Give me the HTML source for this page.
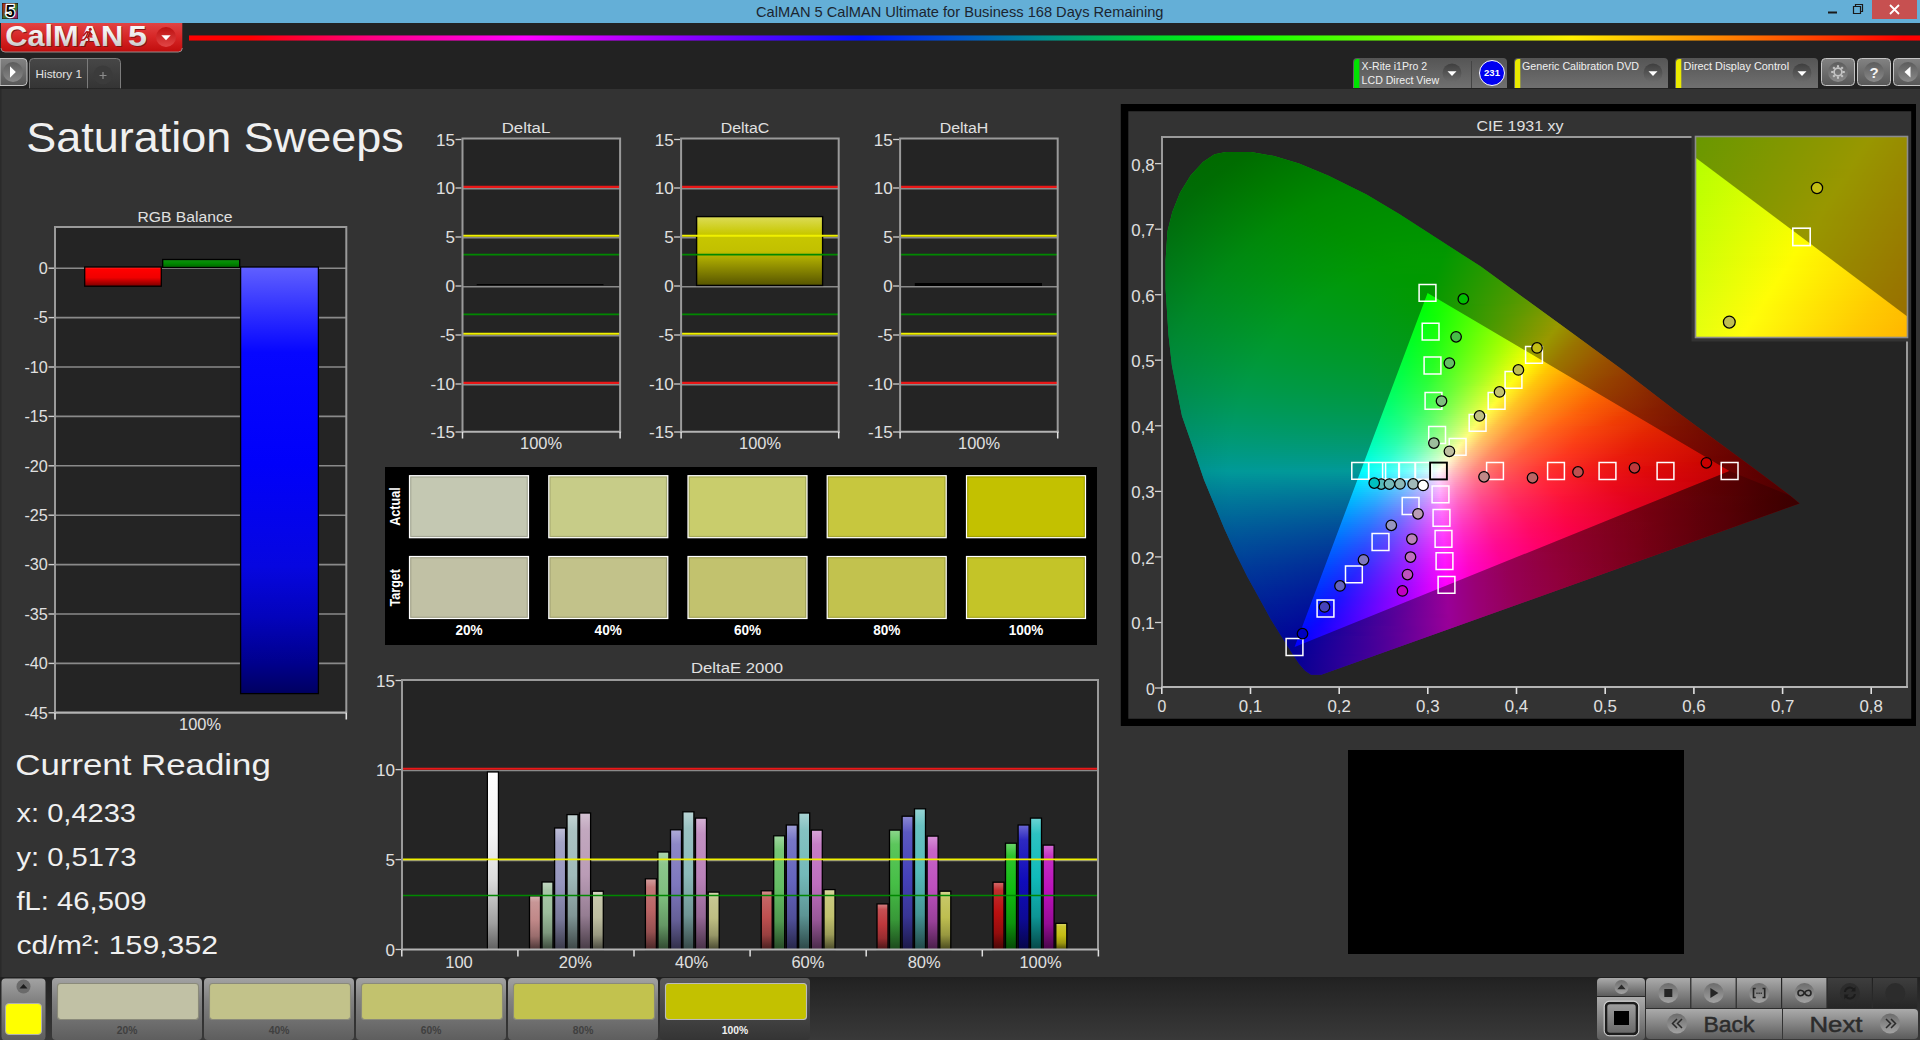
<!DOCTYPE html>
<html><head><meta charset="utf-8"><title>CalMAN 5</title>
<style>
html,body{margin:0;padding:0;background:#333;}
body{width:1920px;height:1040px;overflow:hidden;position:relative;font-family:"Liberation Sans",sans-serif;}
svg{position:absolute;left:0;top:0;display:block;font-family:"Liberation Sans",sans-serif;}
.cie{position:absolute;overflow:hidden;}
.cie i{display:block;height:2px;}
.cie.b i{height:3px;}
</style></head><body>
<svg width="1920" height="1040" viewBox="0 0 1920 1040"><defs><linearGradient id="ico" x1="0" y1="0" x2="1" y2="1"><stop offset="0" stop-color="#e03818"/><stop offset="0.35" stop-color="#905020"/><stop offset="0.6" stop-color="#30a040"/><stop offset="0.8" stop-color="#a03090"/><stop offset="1" stop-color="#c02060"/></linearGradient>
<linearGradient id="rb" x1="189" y1="0" x2="1920" y2="0" gradientUnits="userSpaceOnUse"><stop offset="0" stop-color="#ff0000"/><stop offset="0.035" stop-color="#ff0000"/><stop offset="0.105" stop-color="#ff0080"/><stop offset="0.194" stop-color="#ff00ff"/><stop offset="0.296" stop-color="#8000ff"/><stop offset="0.388" stop-color="#0010ff"/><stop offset="0.44" stop-color="#0050d0"/><stop offset="0.493" stop-color="#009090"/><stop offset="0.563" stop-color="#00dc28"/><stop offset="0.602" stop-color="#00ff00"/><stop offset="0.707" stop-color="#80ff00"/><stop offset="0.799" stop-color="#fff000"/><stop offset="0.89" stop-color="#ff8000"/><stop offset="0.99" stop-color="#ff0000"/><stop offset="1" stop-color="#ff0000"/></linearGradient>
<linearGradient id="logo" x1="0" y1="0" x2="0" y2="1"><stop offset="0" stop-color="#e04444"/><stop offset="0.45" stop-color="#d82828"/><stop offset="1" stop-color="#c00c0c"/></linearGradient>
<linearGradient id="logot" x1="0" y1="0" x2="0" y2="1"><stop offset="0" stop-color="#ffffff"/><stop offset="0.5" stop-color="#ececec"/><stop offset="1" stop-color="#b8b8b8"/></linearGradient>
<linearGradient id="logoc" x1="0" y1="0" x2="0" y2="1"><stop offset="0" stop-color="#bc1010"/><stop offset="1" stop-color="#e24646"/></linearGradient>
<linearGradient id="btn" x1="0" y1="0" x2="0" y2="1"><stop offset="0" stop-color="#838383"/><stop offset="1" stop-color="#575757"/></linearGradient>
<linearGradient id="btnc" x1="0" y1="0" x2="0" y2="1"><stop offset="0" stop-color="#5c5c5c"/><stop offset="1" stop-color="#8a8a8a"/></linearGradient>
<linearGradient id="pan" x1="0" y1="0" x2="0" y2="1"><stop offset="0" stop-color="#555555"/><stop offset="1" stop-color="#707070"/></linearGradient>
<linearGradient id="panc" x1="0" y1="0" x2="0" y2="1"><stop offset="0" stop-color="#3e3e3e"/><stop offset="1" stop-color="#6c6c6c"/></linearGradient>
<linearGradient id="tab" x1="0" y1="0" x2="0" y2="1"><stop offset="0" stop-color="#474747"/><stop offset="1" stop-color="#343434"/></linearGradient>
<linearGradient id="gR" x1="0" y1="0" x2="0" y2="1"><stop offset="0" stop-color="#ff3030"/><stop offset="0.12" stop-color="#ff0000"/><stop offset="0.55" stop-color="#f00000"/><stop offset="1" stop-color="#7a0000"/></linearGradient>
<linearGradient id="gG" x1="0" y1="0" x2="0" y2="1"><stop offset="0" stop-color="#109010"/><stop offset="0.5" stop-color="#008800"/><stop offset="1" stop-color="#006000"/></linearGradient>
<linearGradient id="gB" x1="0" y1="0" x2="0" y2="1"><stop offset="0" stop-color="#6060ff"/><stop offset="0.117" stop-color="#2a2aff"/><stop offset="0.2" stop-color="#0606ff"/><stop offset="0.46" stop-color="#0000fa"/><stop offset="0.7" stop-color="#0606e0"/><stop offset="0.82" stop-color="#0303bc"/><stop offset="0.93" stop-color="#00008c"/><stop offset="1" stop-color="#000060"/></linearGradient>
<linearGradient id="gY" x1="0" y1="0" x2="0" y2="1"><stop offset="0" stop-color="#dcdc58"/><stop offset="0.25" stop-color="#c8c800"/><stop offset="0.5" stop-color="#c2c000"/><stop offset="1" stop-color="#565400"/></linearGradient>
<linearGradient id="bW" x1="0" y1="0" x2="0" y2="1"><stop offset="0" stop-color="#ffffff"/><stop offset="0.35" stop-color="#f4f4f4"/><stop offset="0.6" stop-color="#dcdcdc"/><stop offset="0.85" stop-color="#a0a0a0"/><stop offset="1" stop-color="#606060"/></linearGradient>
<linearGradient id="b20_0" x1="0" y1="0" x2="0" y2="1"><stop offset="0" stop-color="#d8b5b5"/><stop offset="0.12" stop-color="#c89696"/><stop offset="0.45" stop-color="#c08888"/><stop offset="0.75" stop-color="#9a6d6d"/><stop offset="1" stop-color="#493434"/></linearGradient>
<linearGradient id="b20_1" x1="0" y1="0" x2="0" y2="1"><stop offset="0" stop-color="#c2d7c2"/><stop offset="0.12" stop-color="#a8c6a8"/><stop offset="0.45" stop-color="#9cbe9c"/><stop offset="0.75" stop-color="#7d987d"/><stop offset="1" stop-color="#3b483b"/></linearGradient>
<linearGradient id="b20_2" x1="0" y1="0" x2="0" y2="1"><stop offset="0" stop-color="#bebed7"/><stop offset="0.12" stop-color="#a3a3c6"/><stop offset="0.45" stop-color="#9696be"/><stop offset="0.75" stop-color="#787898"/><stop offset="1" stop-color="#393948"/></linearGradient>
<linearGradient id="b20_3" x1="0" y1="0" x2="0" y2="1"><stop offset="0" stop-color="#c4d4d4"/><stop offset="0.12" stop-color="#abc2c2"/><stop offset="0.45" stop-color="#a0baba"/><stop offset="0.75" stop-color="#809595"/><stop offset="1" stop-color="#3d4747"/></linearGradient>
<linearGradient id="b20_4" x1="0" y1="0" x2="0" y2="1"><stop offset="0" stop-color="#d4c2d2"/><stop offset="0.12" stop-color="#c2a8bf"/><stop offset="0.45" stop-color="#ba9cb6"/><stop offset="0.75" stop-color="#957d92"/><stop offset="1" stop-color="#473b45"/></linearGradient>
<linearGradient id="b20_5" x1="0" y1="0" x2="0" y2="1"><stop offset="0" stop-color="#d7d7c4"/><stop offset="0.12" stop-color="#c6c6ab"/><stop offset="0.45" stop-color="#bebea0"/><stop offset="0.75" stop-color="#989880"/><stop offset="1" stop-color="#48483d"/></linearGradient>
<linearGradient id="b40_0" x1="0" y1="0" x2="0" y2="1"><stop offset="0" stop-color="#d49f9f"/><stop offset="0.12" stop-color="#c27777"/><stop offset="0.45" stop-color="#ba6464"/><stop offset="0.75" stop-color="#955050"/><stop offset="1" stop-color="#472626"/></linearGradient>
<linearGradient id="b40_1" x1="0" y1="0" x2="0" y2="1"><stop offset="0" stop-color="#afd7af"/><stop offset="0.12" stop-color="#8dc68d"/><stop offset="0.45" stop-color="#7ebe7e"/><stop offset="0.75" stop-color="#659865"/><stop offset="1" stop-color="#304830"/></linearGradient>
<linearGradient id="b40_2" x1="0" y1="0" x2="0" y2="1"><stop offset="0" stop-color="#afabd7"/><stop offset="0.12" stop-color="#8d88c6"/><stop offset="0.45" stop-color="#7e78be"/><stop offset="0.75" stop-color="#656098"/><stop offset="1" stop-color="#302e48"/></linearGradient>
<linearGradient id="b40_3" x1="0" y1="0" x2="0" y2="1"><stop offset="0" stop-color="#b8d4d4"/><stop offset="0.12" stop-color="#9ac2c2"/><stop offset="0.45" stop-color="#8cbaba"/><stop offset="0.75" stop-color="#709595"/><stop offset="1" stop-color="#354747"/></linearGradient>
<linearGradient id="b40_4" x1="0" y1="0" x2="0" y2="1"><stop offset="0" stop-color="#d4b2d4"/><stop offset="0.12" stop-color="#c291c2"/><stop offset="0.45" stop-color="#ba82ba"/><stop offset="0.75" stop-color="#956895"/><stop offset="1" stop-color="#473147"/></linearGradient>
<linearGradient id="b40_5" x1="0" y1="0" x2="0" y2="1"><stop offset="0" stop-color="#d7d7b2"/><stop offset="0.12" stop-color="#c6c691"/><stop offset="0.45" stop-color="#bebe82"/><stop offset="0.75" stop-color="#989868"/><stop offset="1" stop-color="#484831"/></linearGradient>
<linearGradient id="b60_0" x1="0" y1="0" x2="0" y2="1"><stop offset="0" stop-color="#d79292"/><stop offset="0.12" stop-color="#c66565"/><stop offset="0.45" stop-color="#be5050"/><stop offset="0.75" stop-color="#984040"/><stop offset="1" stop-color="#481e1e"/></linearGradient>
<linearGradient id="b60_1" x1="0" y1="0" x2="0" y2="1"><stop offset="0" stop-color="#9fd79f"/><stop offset="0.12" stop-color="#77c677"/><stop offset="0.45" stop-color="#64be64"/><stop offset="0.75" stop-color="#509850"/><stop offset="1" stop-color="#264826"/></linearGradient>
<linearGradient id="b60_2" x1="0" y1="0" x2="0" y2="1"><stop offset="0" stop-color="#9f9fd7"/><stop offset="0.12" stop-color="#7777c6"/><stop offset="0.45" stop-color="#6464be"/><stop offset="0.75" stop-color="#505098"/><stop offset="1" stop-color="#262648"/></linearGradient>
<linearGradient id="b60_3" x1="0" y1="0" x2="0" y2="1"><stop offset="0" stop-color="#a9d4d4"/><stop offset="0.12" stop-color="#85c2c2"/><stop offset="0.45" stop-color="#74baba"/><stop offset="0.75" stop-color="#5d9595"/><stop offset="1" stop-color="#2c4747"/></linearGradient>
<linearGradient id="b60_4" x1="0" y1="0" x2="0" y2="1"><stop offset="0" stop-color="#d7a5d7"/><stop offset="0.12" stop-color="#c67fc6"/><stop offset="0.45" stop-color="#be6ebe"/><stop offset="0.75" stop-color="#985898"/><stop offset="1" stop-color="#482a48"/></linearGradient>
<linearGradient id="b60_5" x1="0" y1="0" x2="0" y2="1"><stop offset="0" stop-color="#d9d9a5"/><stop offset="0.12" stop-color="#c9c97f"/><stop offset="0.45" stop-color="#c2c26e"/><stop offset="0.75" stop-color="#9b9b58"/><stop offset="1" stop-color="#4a4a2a"/></linearGradient>
<linearGradient id="b80_0" x1="0" y1="0" x2="0" y2="1"><stop offset="0" stop-color="#d78486"/><stop offset="0.12" stop-color="#c65053"/><stop offset="0.45" stop-color="#be383c"/><stop offset="0.75" stop-color="#982d30"/><stop offset="1" stop-color="#481517"/></linearGradient>
<linearGradient id="b80_1" x1="0" y1="0" x2="0" y2="1"><stop offset="0" stop-color="#8cd78c"/><stop offset="0.12" stop-color="#5cc65c"/><stop offset="0.45" stop-color="#46be46"/><stop offset="0.75" stop-color="#389838"/><stop offset="1" stop-color="#1b481b"/></linearGradient>
<linearGradient id="b80_2" x1="0" y1="0" x2="0" y2="1"><stop offset="0" stop-color="#8c8ad4"/><stop offset="0.12" stop-color="#5c59c2"/><stop offset="0.45" stop-color="#4642ba"/><stop offset="0.75" stop-color="#383595"/><stop offset="1" stop-color="#1b1947"/></linearGradient>
<linearGradient id="b80_3" x1="0" y1="0" x2="0" y2="1"><stop offset="0" stop-color="#96d4d4"/><stop offset="0.12" stop-color="#6ac2c2"/><stop offset="0.45" stop-color="#56baba"/><stop offset="0.75" stop-color="#459595"/><stop offset="1" stop-color="#214747"/></linearGradient>
<linearGradient id="b80_4" x1="0" y1="0" x2="0" y2="1"><stop offset="0" stop-color="#d792d7"/><stop offset="0.12" stop-color="#c665c6"/><stop offset="0.45" stop-color="#be50be"/><stop offset="0.75" stop-color="#984098"/><stop offset="1" stop-color="#481e48"/></linearGradient>
<linearGradient id="b80_5" x1="0" y1="0" x2="0" y2="1"><stop offset="0" stop-color="#d7d792"/><stop offset="0.12" stop-color="#c6c665"/><stop offset="0.45" stop-color="#bebe50"/><stop offset="0.75" stop-color="#989840"/><stop offset="1" stop-color="#48481e"/></linearGradient>
<linearGradient id="b100_0" x1="0" y1="0" x2="0" y2="1"><stop offset="0" stop-color="#d46b6b"/><stop offset="0.12" stop-color="#c22d2d"/><stop offset="0.45" stop-color="#ba1010"/><stop offset="0.75" stop-color="#950d0d"/><stop offset="1" stop-color="#470606"/></linearGradient>
<linearGradient id="b100_1" x1="0" y1="0" x2="0" y2="1"><stop offset="0" stop-color="#6bd46b"/><stop offset="0.12" stop-color="#2dc22d"/><stop offset="0.45" stop-color="#10ba10"/><stop offset="0.75" stop-color="#0d950d"/><stop offset="1" stop-color="#064706"/></linearGradient>
<linearGradient id="b100_2" x1="0" y1="0" x2="0" y2="1"><stop offset="0" stop-color="#6b68d4"/><stop offset="0.12" stop-color="#2d29c2"/><stop offset="0.45" stop-color="#100cba"/><stop offset="0.75" stop-color="#0d0a95"/><stop offset="1" stop-color="#060547"/></linearGradient>
<linearGradient id="b100_3" x1="0" y1="0" x2="0" y2="1"><stop offset="0" stop-color="#6bd4d4"/><stop offset="0.12" stop-color="#2dc2c2"/><stop offset="0.45" stop-color="#10baba"/><stop offset="0.75" stop-color="#0d9595"/><stop offset="1" stop-color="#064747"/></linearGradient>
<linearGradient id="b100_4" x1="0" y1="0" x2="0" y2="1"><stop offset="0" stop-color="#d46bd4"/><stop offset="0.12" stop-color="#c22dc2"/><stop offset="0.45" stop-color="#ba10ba"/><stop offset="0.75" stop-color="#950d95"/><stop offset="1" stop-color="#470647"/></linearGradient>
<linearGradient id="b100_5" x1="0" y1="0" x2="0" y2="1"><stop offset="0" stop-color="#dad76d"/><stop offset="0.12" stop-color="#cbc630"/><stop offset="0.45" stop-color="#c4be14"/><stop offset="0.75" stop-color="#9d9810"/><stop offset="1" stop-color="#4a4808"/></linearGradient>
<linearGradient id="bot" x1="0" y1="0" x2="0" y2="1"><stop offset="0" stop-color="#202020"/><stop offset="0.1" stop-color="#242424"/><stop offset="1" stop-color="#393939"/></linearGradient>
<linearGradient id="box" x1="0" y1="0" x2="0" y2="1"><stop offset="0" stop-color="#a2a2a2"/><stop offset="0.35" stop-color="#828282"/><stop offset="1" stop-color="#5e5e5e"/></linearGradient>
<linearGradient id="boxs" x1="0" y1="0" x2="0" y2="1"><stop offset="0" stop-color="#5c5c5c"/><stop offset="1" stop-color="#343434"/></linearGradient>
<linearGradient id="tb" x1="0" y1="0" x2="0" y2="1"><stop offset="0" stop-color="#ababab"/><stop offset="1" stop-color="#5c5c5c"/></linearGradient>
<linearGradient id="tbd" x1="0" y1="0" x2="0" y2="1"><stop offset="0" stop-color="#3e3e3e"/><stop offset="1" stop-color="#262626"/></linearGradient>
<linearGradient id="tbc" x1="0" y1="0" x2="0" y2="1"><stop offset="0" stop-color="#6c6c6c"/><stop offset="1" stop-color="#a2a2a2"/></linearGradient></defs>
<rect x="0" y="0" width="1920" height="1040" fill="#333333"/>
<rect x="0" y="0" width="1920" height="23" fill="#64afd7"/>
<text x="756" y="17" font-size="15" fill="#1b2530" textLength="407.5" lengthAdjust="spacingAndGlyphs">CalMAN 5 CalMAN Ultimate for Business 168 Days Remaining</text>
<rect x="2" y="3" width="16" height="16" fill="#181010"/><rect x="2.5" y="3.500" width="15" height="15" fill="url(#ico)" opacity=".8"/>
<text x="10.2" y="16.6" font-size="16" font-weight="bold" text-anchor="middle" fill="#000" stroke="#fff" stroke-width="2.4" paint-order="stroke">5</text>
<rect x="1828" y="11.5" width="9" height="2" fill="#1a1a1a"/>
<path d="M1853.5 6.5h7v7h-7z M1855.5 6.5v-2h7v7h-2" fill="none" stroke="#1a1a1a" stroke-width="1.2"/>
<rect x="1872" y="0" width="45" height="19" fill="#c75050"/>
<path d="M1890 5l9 9m0-9l-9 9" stroke="#fff" stroke-width="1.8" fill="none"/>
<rect x="0" y="23" width="1920" height="66" fill="#222222"/>
<rect x="189" y="35" width="1731" height="6" fill="url(#rb)" opacity=".55"/>
<rect x="189" y="36" width="1731" height="4" fill="url(#rb)"/>
<path d="M1 23h181.300v25a4 4 0 0 1-4 4h-173.300a4 4 0 0 1-4-4z" fill="url(#logo)"/>
<path d="M1 48a4 4 0 0 0 4 4h173.300a4 4 0 0 0 4-4" fill="none" stroke="#9a8a8a" stroke-width="1"/>
<g font-weight="bold" font-size="29">
<text x="6.100" y="46.800" fill="#801414" textLength="118" lengthAdjust="spacingAndGlyphs">CalMAN</text>
<text x="128.800" y="46.800" fill="#801414" textLength="19" lengthAdjust="spacingAndGlyphs">5</text>
<text x="5.200" y="45.700" fill="url(#logot)" textLength="118" lengthAdjust="spacingAndGlyphs">CalMAN</text>
<text x="127.900" y="45.700" fill="url(#logot)" textLength="19" lengthAdjust="spacingAndGlyphs">5</text>
</g>
<circle cx="166" cy="37" r="10" fill="url(#logoc)"/><path d="M161.3 35.3h9.4l-4.7 5z" fill="#fff"/>
<path d="M83.500 35.500l3.200-3.800 3 .6 2.200 2.400M88 32.500l-1.600 4 2.600 2.400-.4 3.200M86.200 37l-2 2.600-2.600.6" stroke="#b01414" stroke-width="1.500" fill="none" stroke-linecap="round" stroke-linejoin="round"/><circle cx="90.300" cy="29.300" r="1.500" fill="#b01414"/>
<path d="M0 58.5h23a4 4 0 0 1 4 4v19a4 4 0 0 1-4 4h-23z" fill="url(#btn)" stroke="#c4c4c4"/>
<circle cx="13" cy="72" r="10" fill="url(#btnc)"/><path d="M10 66.3v11.4l5.8-5.7z" fill="#fff"/>
<path d="M29.5 88.3v-25.8a4 4 0 0 1 4-4h83a4 4 0 0 1 4 4v25.8" fill="url(#tab)" stroke="#7c7c7c"/>
<path d="M87.5 59v29.300" stroke="#7c7c7c"/>
<text x="35.5" y="78.2" font-size="11.5" fill="#e4e4e4" textLength="46.5" lengthAdjust="spacingAndGlyphs">History 1</text>
<circle cx="103" cy="75" r="9.5" fill="#3b3b3b"/><path d="M99.5 75.5h7M103 72v7" stroke="#8c8c8c" stroke-width="1.2"/>
<path d="M1353 88v-26a4 4 0 0 1 4-4h146a4 4 0 0 1 4 4v26z" fill="url(#pan)"/>
<path d="M1354 88v-25.500a3.5 3.5 0 0 1 3.5-3.5h1.800v29z" fill="#00e400"/>
<circle cx="1452" cy="73" r="9.5" fill="url(#panc)"/><path d="M1447.5 71.3h9l-4.5 4.8z" fill="#fff"/>
<path d="M1471.5 61v27" stroke="#444" stroke-width="1"/>
<circle cx="1492" cy="73" r="12.5" fill="#0000f0" stroke="#fff" stroke-width="1"/>
<text x="1492" y="76.4" font-size="9.5" fill="#fff" text-anchor="middle" font-weight="bold">231</text>
<text x="1361.6" y="69.6" font-size="10.5" fill="#f0f0f0" textLength="65.5" lengthAdjust="spacingAndGlyphs">X-Rite i1Pro 2</text>
<text x="1361.6" y="83.5" font-size="10.5" fill="#f0f0f0" textLength="77.5" lengthAdjust="spacingAndGlyphs">LCD Direct View</text>
<path d="M1514 88v-26a4 4 0 0 1 4-4h146a4 4 0 0 1 4 4v26z" fill="url(#pan)"/>
<path d="M1515 88v-25.500a3.5 3.5 0 0 1 3.5-3.5h1.800v29z" fill="#eaea00"/>
<circle cx="1653" cy="73" r="9.5" fill="url(#panc)"/><path d="M1648.5 71.3h9l-4.5 4.8z" fill="#fff"/>
<text x="1522" y="69.6" font-size="10.5" fill="#f0f0f0" textLength="117" lengthAdjust="spacingAndGlyphs">Generic Calibration DVD</text>
<path d="M1675 88v-26a4 4 0 0 1 4-4h135a4 4 0 0 1 4 4v26z" fill="url(#pan)"/>
<path d="M1676 88v-25.500a3.5 3.5 0 0 1 3.5-3.5h1.800v29z" fill="#eaea00"/>
<circle cx="1802" cy="73" r="9.5" fill="url(#panc)"/><path d="M1797.5 71.3h9l-4.5 4.8z" fill="#fff"/>
<text x="1683.6" y="69.6" font-size="10.5" fill="#f0f0f0" textLength="105.5" lengthAdjust="spacingAndGlyphs">Direct Display Control</text>
<rect x="1821.5" y="58.5" width="33" height="27" rx="4" fill="url(#btn)" stroke="#c4c4c4" stroke-width="1"/>
<circle cx="1838" cy="72" r="10" fill="url(#btnc)"/>
<rect x="1857.5" y="58.5" width="33" height="27" rx="4" fill="url(#btn)" stroke="#c4c4c4" stroke-width="1"/>
<circle cx="1874" cy="72" r="10" fill="url(#btnc)"/>
<rect x="1893.5" y="58.5" width="33" height="27" rx="4" fill="url(#btn)" stroke="#c4c4c4" stroke-width="1"/>
<circle cx="1908" cy="72" r="10" fill="url(#btnc)"/>
<path d="M1842.50 72.00L1844.80 72.00" stroke="#c4c4c4" stroke-width="2.1"/><path d="M1841.18 75.18L1842.81 76.81" stroke="#c4c4c4" stroke-width="2.1"/><path d="M1838.00 76.50L1838.00 78.80" stroke="#c4c4c4" stroke-width="2.1"/><path d="M1834.82 75.18L1833.19 76.81" stroke="#c4c4c4" stroke-width="2.1"/><path d="M1833.50 72.00L1831.20 72.00" stroke="#c4c4c4" stroke-width="2.1"/><path d="M1834.82 68.82L1833.19 67.19" stroke="#c4c4c4" stroke-width="2.1"/><path d="M1838.00 67.50L1838.00 65.20" stroke="#c4c4c4" stroke-width="2.1"/><path d="M1841.18 68.82L1842.81 67.19" stroke="#c4c4c4" stroke-width="2.1"/><circle cx="1838" cy="72" r="3.9" fill="none" stroke="#c4c4c4" stroke-width="1.7"/>
<text x="1874" y="77.5" font-size="15" fill="#f4f4f4" text-anchor="middle" font-weight="bold">?</text>
<path d="M1910.5 66.5v11l-6-5.5z" fill="#fff"/>
<rect x="0" y="89" width="1.5" height="888" fill="#2a2a2a"/>
<text x="26.3" y="152" font-size="42" fill="#f0f0f0" textLength="377.5" lengthAdjust="spacingAndGlyphs">Saturation Sweeps</text>
<text x="15.3" y="775.3" font-size="29.5" fill="#f0f0f0" textLength="255.5" lengthAdjust="spacingAndGlyphs">Current Reading</text>
<text x="16.5" y="821.8" font-size="26.5" fill="#f0f0f0" textLength="119.5" lengthAdjust="spacingAndGlyphs">x: 0,4233</text>
<text x="16.5" y="865.6" font-size="26.5" fill="#f0f0f0" textLength="120" lengthAdjust="spacingAndGlyphs">y: 0,5173</text>
<text x="16.5" y="910.3" font-size="26.5" fill="#f0f0f0" textLength="130" lengthAdjust="spacingAndGlyphs">fL: 46,509</text>
<text x="16.5" y="954.0" font-size="26.5" fill="#f0f0f0" textLength="201.5" lengthAdjust="spacingAndGlyphs">cd/m²: 159,352</text>
<text x="185" y="222.3" font-size="15.5" fill="#e0e0e0" text-anchor="middle" textLength="95" lengthAdjust="spacingAndGlyphs">RGB Balance</text>
<rect x="55" y="227" width="291" height="485.5" fill="#242424"/>
<path d="M55 268.2h291" stroke="#8a8a8a" stroke-width="1.6"/>
<path d="M48.5 268.2h6" stroke="#d0d0d0" stroke-width="1.4"/>
<text x="47.8" y="273.9" font-size="16.2" fill="#e0e0e0" text-anchor="end">0</text>
<path d="M55 317.6h291" stroke="#8a8a8a" stroke-width="1.6"/>
<path d="M48.5 317.6h6" stroke="#d0d0d0" stroke-width="1.4"/>
<text x="47.8" y="323.3" font-size="16.2" fill="#e0e0e0" text-anchor="end">-5</text>
<path d="M55 367.0h291" stroke="#8a8a8a" stroke-width="1.6"/>
<path d="M48.5 367.0h6" stroke="#d0d0d0" stroke-width="1.4"/>
<text x="47.8" y="372.7" font-size="16.2" fill="#e0e0e0" text-anchor="end">-10</text>
<path d="M55 416.4h291" stroke="#8a8a8a" stroke-width="1.6"/>
<path d="M48.5 416.4h6" stroke="#d0d0d0" stroke-width="1.4"/>
<text x="47.8" y="422.1" font-size="16.2" fill="#e0e0e0" text-anchor="end">-15</text>
<path d="M55 465.8h291" stroke="#8a8a8a" stroke-width="1.6"/>
<path d="M48.5 465.8h6" stroke="#d0d0d0" stroke-width="1.4"/>
<text x="47.8" y="471.5" font-size="16.2" fill="#e0e0e0" text-anchor="end">-20</text>
<path d="M55 515.2h291" stroke="#8a8a8a" stroke-width="1.6"/>
<path d="M48.5 515.2h6" stroke="#d0d0d0" stroke-width="1.4"/>
<text x="47.8" y="520.9" font-size="16.2" fill="#e0e0e0" text-anchor="end">-25</text>
<path d="M55 564.6h291" stroke="#8a8a8a" stroke-width="1.6"/>
<path d="M48.5 564.6h6" stroke="#d0d0d0" stroke-width="1.4"/>
<text x="47.8" y="570.3" font-size="16.2" fill="#e0e0e0" text-anchor="end">-30</text>
<path d="M55 614.0h291" stroke="#8a8a8a" stroke-width="1.6"/>
<path d="M48.5 614.0h6" stroke="#d0d0d0" stroke-width="1.4"/>
<text x="47.8" y="619.7" font-size="16.2" fill="#e0e0e0" text-anchor="end">-35</text>
<path d="M55 663.4h291" stroke="#8a8a8a" stroke-width="1.6"/>
<path d="M48.5 663.4h6" stroke="#d0d0d0" stroke-width="1.4"/>
<text x="47.8" y="669.1" font-size="16.2" fill="#e0e0e0" text-anchor="end">-40</text>
<path d="M48.5 712.8h6" stroke="#d0d0d0" stroke-width="1.4"/>
<text x="47.8" y="718.5" font-size="16.2" fill="#e0e0e0" text-anchor="end">-45</text>
<path d="M55 713V227h291.3V713" fill="none" stroke="#9a9a9a" stroke-width="2"/>
<path d="M54 712.6h293" stroke="#b4b4b4" stroke-width="2.2"/>
<path d="M55 713v6.5M346.3 713v6.5" stroke="#e0e0e0" stroke-width="1.6"/>
<text x="200" y="730" font-size="16.5" fill="#e0e0e0" text-anchor="middle" textLength="42" lengthAdjust="spacingAndGlyphs">100%</text>
<rect x="84.7" y="267" width="76.6" height="19.2" fill="url(#gR)" stroke="#000" stroke-width="1.3"/>
<rect x="162.7" y="259.5" width="77" height="8" fill="url(#gG)" stroke="#000" stroke-width="1.3"/>
<rect x="240.6" y="267" width="77.8" height="426.6" fill="url(#gB)" stroke="#000" stroke-width="1.3"/>
<text x="526" y="132.8" font-size="15.5" fill="#e0e0e0" text-anchor="middle" textLength="48.5" lengthAdjust="spacingAndGlyphs">DeltaL</text>
<rect x="462" y="138.5" width="158.6" height="293.5" fill="#242424"/>
<path d="M455.5 139.5h6" stroke="#d0d0d0" stroke-width="1.3"/>
<text x="455" y="145.7" font-size="17" fill="#e0e0e0" text-anchor="end">15</text>
<path d="M462 188.7H620.6" stroke="#8a8a8a" stroke-width="1.4"/>
<path d="M455.5 188.0h6" stroke="#d0d0d0" stroke-width="1.3"/>
<text x="455" y="194.2" font-size="17" fill="#e0e0e0" text-anchor="end">10</text>
<path d="M462 237.7H620.6" stroke="#8a8a8a" stroke-width="1.4"/>
<path d="M455.5 237.0h6" stroke="#d0d0d0" stroke-width="1.3"/>
<text x="455" y="243.2" font-size="17" fill="#e0e0e0" text-anchor="end">5</text>
<path d="M462 286.7H620.6" stroke="#8a8a8a" stroke-width="1.4"/>
<path d="M455.5 286.0h6" stroke="#d0d0d0" stroke-width="1.3"/>
<text x="455" y="292.2" font-size="17" fill="#e0e0e0" text-anchor="end">0</text>
<path d="M462 335.7H620.6" stroke="#8a8a8a" stroke-width="1.4"/>
<path d="M455.5 335.0h6" stroke="#d0d0d0" stroke-width="1.3"/>
<text x="455" y="341.2" font-size="17" fill="#e0e0e0" text-anchor="end">-5</text>
<path d="M462 384.7H620.6" stroke="#8a8a8a" stroke-width="1.4"/>
<path d="M455.5 384.0h6" stroke="#d0d0d0" stroke-width="1.3"/>
<text x="455" y="390.2" font-size="17" fill="#e0e0e0" text-anchor="end">-10</text>
<path d="M455.5 432.0h6" stroke="#d0d0d0" stroke-width="1.3"/>
<text x="455" y="438.2" font-size="17" fill="#e0e0e0" text-anchor="end">-15</text>
<path d="M462 186.8H620.6" stroke="#e81818" stroke-width="2.2"/>
<path d="M462 382.8H620.6" stroke="#e81818" stroke-width="2.2"/>
<path d="M462 235.8H620.6" stroke="#f0f000" stroke-width="2"/>
<path d="M462 333.8H620.6" stroke="#f0f000" stroke-width="2"/>
<path d="M462 254.6H620.6" stroke="#008800" stroke-width="1.6"/>
<path d="M462 314.4H620.6" stroke="#008800" stroke-width="1.6"/>
<path d="M462.5 432.5V138.5H620.1V432.5" fill="none" stroke="#9a9a9a" stroke-width="2"/>
<path d="M461.5 431.8H621.1" stroke="#b4b4b4" stroke-width="2"/>
<path d="M462.5 432v6.5M620.1 432v6.5" stroke="#e0e0e0" stroke-width="1.5"/>
<text x="541" y="449.3" font-size="16.5" fill="#e0e0e0" text-anchor="middle" textLength="42" lengthAdjust="spacingAndGlyphs">100%</text>
<text x="745" y="132.8" font-size="15.5" fill="#e0e0e0" text-anchor="middle" textLength="48.5" lengthAdjust="spacingAndGlyphs">DeltaC</text>
<rect x="680.6" y="138.5" width="158.6" height="293.5" fill="#242424"/>
<path d="M674.1 139.5h6" stroke="#d0d0d0" stroke-width="1.3"/>
<text x="673.6" y="145.7" font-size="17" fill="#e0e0e0" text-anchor="end">15</text>
<path d="M680.6 188.7H839.2" stroke="#8a8a8a" stroke-width="1.4"/>
<path d="M674.1 188.0h6" stroke="#d0d0d0" stroke-width="1.3"/>
<text x="673.6" y="194.2" font-size="17" fill="#e0e0e0" text-anchor="end">10</text>
<path d="M680.6 237.7H839.2" stroke="#8a8a8a" stroke-width="1.4"/>
<path d="M674.1 237.0h6" stroke="#d0d0d0" stroke-width="1.3"/>
<text x="673.6" y="243.2" font-size="17" fill="#e0e0e0" text-anchor="end">5</text>
<path d="M680.6 286.7H839.2" stroke="#8a8a8a" stroke-width="1.4"/>
<path d="M674.1 286.0h6" stroke="#d0d0d0" stroke-width="1.3"/>
<text x="673.6" y="292.2" font-size="17" fill="#e0e0e0" text-anchor="end">0</text>
<path d="M680.6 335.7H839.2" stroke="#8a8a8a" stroke-width="1.4"/>
<path d="M674.1 335.0h6" stroke="#d0d0d0" stroke-width="1.3"/>
<text x="673.6" y="341.2" font-size="17" fill="#e0e0e0" text-anchor="end">-5</text>
<path d="M680.6 384.7H839.2" stroke="#8a8a8a" stroke-width="1.4"/>
<path d="M674.1 384.0h6" stroke="#d0d0d0" stroke-width="1.3"/>
<text x="673.6" y="390.2" font-size="17" fill="#e0e0e0" text-anchor="end">-10</text>
<path d="M674.1 432.0h6" stroke="#d0d0d0" stroke-width="1.3"/>
<text x="673.6" y="438.2" font-size="17" fill="#e0e0e0" text-anchor="end">-15</text>
<rect x="696.6" y="216.6" width="126" height="68.8" fill="url(#gY)" stroke="#000" stroke-width="1.4"/>
<path d="M680.6 186.8H839.2" stroke="#e81818" stroke-width="2.2"/>
<path d="M680.6 382.8H839.2" stroke="#e81818" stroke-width="2.2"/>
<path d="M680.6 235.8H839.2" stroke="#f0f000" stroke-width="2"/>
<path d="M680.6 333.8H839.2" stroke="#f0f000" stroke-width="2"/>
<path d="M680.6 254.6H839.2" stroke="#008800" stroke-width="1.6"/>
<path d="M680.6 314.4H839.2" stroke="#008800" stroke-width="1.6"/>
<path d="M681.1 432.5V138.5H838.7V432.5" fill="none" stroke="#9a9a9a" stroke-width="2"/>
<path d="M680.1 431.8H839.7" stroke="#b4b4b4" stroke-width="2"/>
<path d="M681.1 432v6.5M838.7 432v6.5" stroke="#e0e0e0" stroke-width="1.5"/>
<text x="760" y="449.3" font-size="16.5" fill="#e0e0e0" text-anchor="middle" textLength="42" lengthAdjust="spacingAndGlyphs">100%</text>
<text x="964" y="132.8" font-size="15.5" fill="#e0e0e0" text-anchor="middle" textLength="48.5" lengthAdjust="spacingAndGlyphs">DeltaH</text>
<rect x="899.6" y="138.5" width="158.6" height="293.5" fill="#242424"/>
<path d="M893.1 139.5h6" stroke="#d0d0d0" stroke-width="1.3"/>
<text x="892.6" y="145.7" font-size="17" fill="#e0e0e0" text-anchor="end">15</text>
<path d="M899.6 188.7H1058.2" stroke="#8a8a8a" stroke-width="1.4"/>
<path d="M893.1 188.0h6" stroke="#d0d0d0" stroke-width="1.3"/>
<text x="892.6" y="194.2" font-size="17" fill="#e0e0e0" text-anchor="end">10</text>
<path d="M899.6 237.7H1058.2" stroke="#8a8a8a" stroke-width="1.4"/>
<path d="M893.1 237.0h6" stroke="#d0d0d0" stroke-width="1.3"/>
<text x="892.6" y="243.2" font-size="17" fill="#e0e0e0" text-anchor="end">5</text>
<path d="M899.6 286.7H1058.2" stroke="#8a8a8a" stroke-width="1.4"/>
<path d="M893.1 286.0h6" stroke="#d0d0d0" stroke-width="1.3"/>
<text x="892.6" y="292.2" font-size="17" fill="#e0e0e0" text-anchor="end">0</text>
<path d="M899.6 335.7H1058.2" stroke="#8a8a8a" stroke-width="1.4"/>
<path d="M893.1 335.0h6" stroke="#d0d0d0" stroke-width="1.3"/>
<text x="892.6" y="341.2" font-size="17" fill="#e0e0e0" text-anchor="end">-5</text>
<path d="M899.6 384.7H1058.2" stroke="#8a8a8a" stroke-width="1.4"/>
<path d="M893.1 384.0h6" stroke="#d0d0d0" stroke-width="1.3"/>
<text x="892.6" y="390.2" font-size="17" fill="#e0e0e0" text-anchor="end">-10</text>
<path d="M893.1 432.0h6" stroke="#d0d0d0" stroke-width="1.3"/>
<text x="892.6" y="438.2" font-size="17" fill="#e0e0e0" text-anchor="end">-15</text>
<path d="M899.6 186.8H1058.2" stroke="#e81818" stroke-width="2.2"/>
<path d="M899.6 382.8H1058.2" stroke="#e81818" stroke-width="2.2"/>
<path d="M899.6 235.8H1058.2" stroke="#f0f000" stroke-width="2"/>
<path d="M899.6 333.8H1058.2" stroke="#f0f000" stroke-width="2"/>
<path d="M899.6 254.6H1058.2" stroke="#008800" stroke-width="1.6"/>
<path d="M899.6 314.4H1058.2" stroke="#008800" stroke-width="1.6"/>
<path d="M900.1 432.5V138.5H1057.7V432.5" fill="none" stroke="#9a9a9a" stroke-width="2"/>
<path d="M899.1 431.8H1058.7" stroke="#b4b4b4" stroke-width="2"/>
<path d="M900.1 432v6.5M1057.7 432v6.5" stroke="#e0e0e0" stroke-width="1.5"/>
<text x="979" y="449.3" font-size="16.5" fill="#e0e0e0" text-anchor="middle" textLength="42" lengthAdjust="spacingAndGlyphs">100%</text>
<path d="M476.7 284.6H603.5" stroke="#000" stroke-width="1.2"/>
<rect x="914.8" y="283" width="127.2" height="3" fill="#000"/>
<rect x="385" y="467" width="712" height="178" fill="#000"/>
<rect x="409.5" y="475.7" width="119" height="62" fill="#c4c8b2" stroke="#fff" stroke-width="1.2"/>
<rect x="410.8" y="477.0" width="116.4" height="59.4" fill="none" stroke="#000" stroke-opacity=".18" stroke-width="1"/>
<rect x="409.5" y="556.5" width="119" height="62" fill="#c1c1a5" stroke="#fff" stroke-width="1.2"/>
<rect x="410.8" y="557.8" width="116.4" height="59.4" fill="none" stroke="#000" stroke-opacity=".18" stroke-width="1"/>
<text x="469.0" y="635.3" font-size="14" fill="#fff" text-anchor="middle" font-weight="bold" textLength="27.2" lengthAdjust="spacingAndGlyphs">20%</text>
<rect x="548.8" y="475.7" width="119" height="62" fill="#c7cc88" stroke="#fff" stroke-width="1.2"/>
<rect x="550.0" y="477.0" width="116.4" height="59.4" fill="none" stroke="#000" stroke-opacity=".18" stroke-width="1"/>
<rect x="548.8" y="556.5" width="119" height="62" fill="#c2c28a" stroke="#fff" stroke-width="1.2"/>
<rect x="550.0" y="557.8" width="116.4" height="59.4" fill="none" stroke="#000" stroke-opacity=".18" stroke-width="1"/>
<text x="608.2" y="635.3" font-size="14" fill="#fff" text-anchor="middle" font-weight="bold" textLength="27.2" lengthAdjust="spacingAndGlyphs">40%</text>
<rect x="688.0" y="475.7" width="119" height="62" fill="#c9cd6c" stroke="#fff" stroke-width="1.2"/>
<rect x="689.3" y="477.0" width="116.4" height="59.4" fill="none" stroke="#000" stroke-opacity=".18" stroke-width="1"/>
<rect x="688.0" y="556.5" width="119" height="62" fill="#c2c26e" stroke="#fff" stroke-width="1.2"/>
<rect x="689.3" y="557.8" width="116.4" height="59.4" fill="none" stroke="#000" stroke-opacity=".18" stroke-width="1"/>
<text x="747.5" y="635.3" font-size="14" fill="#fff" text-anchor="middle" font-weight="bold" textLength="27.2" lengthAdjust="spacingAndGlyphs">60%</text>
<rect x="827.2" y="475.7" width="119" height="62" fill="#c7c73e" stroke="#fff" stroke-width="1.2"/>
<rect x="828.5" y="477.0" width="116.4" height="59.4" fill="none" stroke="#000" stroke-opacity=".18" stroke-width="1"/>
<rect x="827.2" y="556.5" width="119" height="62" fill="#c2c24e" stroke="#fff" stroke-width="1.2"/>
<rect x="828.5" y="557.8" width="116.4" height="59.4" fill="none" stroke="#000" stroke-opacity=".18" stroke-width="1"/>
<text x="886.8" y="635.3" font-size="14" fill="#fff" text-anchor="middle" font-weight="bold" textLength="27.2" lengthAdjust="spacingAndGlyphs">80%</text>
<rect x="966.5" y="475.7" width="119" height="62" fill="#c3c100" stroke="#fff" stroke-width="1.2"/>
<rect x="967.8" y="477.0" width="116.4" height="59.4" fill="none" stroke="#000" stroke-opacity=".18" stroke-width="1"/>
<rect x="966.5" y="556.5" width="119" height="62" fill="#c4c428" stroke="#fff" stroke-width="1.2"/>
<rect x="967.8" y="557.8" width="116.4" height="59.4" fill="none" stroke="#000" stroke-opacity=".18" stroke-width="1"/>
<text x="1026.0" y="635.3" font-size="14" fill="#fff" text-anchor="middle" font-weight="bold" textLength="34.6" lengthAdjust="spacingAndGlyphs">100%</text>
<text transform="translate(400,506.500) rotate(-90)" font-size="14.5" font-weight="bold" fill="#fff" text-anchor="middle" textLength="38.500" lengthAdjust="spacingAndGlyphs">Actual</text>
<text transform="translate(400,587.700) rotate(-90)" font-size="14.5" font-weight="bold" fill="#fff" text-anchor="middle" textLength="37.500" lengthAdjust="spacingAndGlyphs">Target</text>
<text x="737" y="673" font-size="15.5" fill="#e0e0e0" text-anchor="middle" textLength="92" lengthAdjust="spacingAndGlyphs">DeltaE 2000</text>
<rect x="402" y="680" width="696" height="269.5" fill="#242424"/>
<path d="M395.5 680.5h6" stroke="#d0d0d0" stroke-width="1.3"/>
<text x="395" y="686.7" font-size="17" fill="#e0e0e0" text-anchor="end">15</text>
<path d="M402 770.6H1098" stroke="#8a8a8a" stroke-width="1.4"/>
<path d="M395.5 769.6h6" stroke="#d0d0d0" stroke-width="1.3"/>
<text x="395" y="775.8" font-size="17" fill="#e0e0e0" text-anchor="end">10</text>
<path d="M402 860.6H1098" stroke="#8a8a8a" stroke-width="1.4"/>
<path d="M395.5 859.6h6" stroke="#d0d0d0" stroke-width="1.3"/>
<text x="395" y="865.8" font-size="17" fill="#e0e0e0" text-anchor="end">5</text>
<path d="M395.5 949.5h6" stroke="#d0d0d0" stroke-width="1.3"/>
<text x="395" y="955.7" font-size="17" fill="#e0e0e0" text-anchor="end">0</text>
<rect x="487.4" y="772" width="11" height="177.6" fill="url(#bW)" stroke="#000" stroke-width="1.2"/>
<rect x="529.5" y="895.8" width="11" height="53.8" fill="url(#b20_0)" stroke="#000" stroke-width="1.3"/>
<rect x="542.0" y="882.0" width="11" height="67.6" fill="url(#b20_1)" stroke="#000" stroke-width="1.3"/>
<rect x="554.6" y="828.0" width="11" height="121.6" fill="url(#b20_2)" stroke="#000" stroke-width="1.3"/>
<rect x="567.0" y="814.6" width="11" height="135.0" fill="url(#b20_3)" stroke="#000" stroke-width="1.3"/>
<rect x="579.6" y="813.0" width="11" height="136.6" fill="url(#b20_4)" stroke="#000" stroke-width="1.3"/>
<rect x="592.3" y="891.2" width="11" height="58.4" fill="url(#b20_5)" stroke="#000" stroke-width="1.3"/>
<rect x="645.4" y="878.8" width="11" height="70.8" fill="url(#b40_0)" stroke="#000" stroke-width="1.3"/>
<rect x="657.9" y="852.0" width="11" height="97.6" fill="url(#b40_1)" stroke="#000" stroke-width="1.3"/>
<rect x="670.5" y="829.8" width="11" height="119.8" fill="url(#b40_2)" stroke="#000" stroke-width="1.3"/>
<rect x="682.9" y="811.8" width="11" height="137.8" fill="url(#b40_3)" stroke="#000" stroke-width="1.3"/>
<rect x="695.5" y="818.1" width="11" height="131.5" fill="url(#b40_4)" stroke="#000" stroke-width="1.3"/>
<rect x="708.2" y="892.1" width="11" height="57.5" fill="url(#b40_5)" stroke="#000" stroke-width="1.3"/>
<rect x="761.2" y="890.8" width="11" height="58.8" fill="url(#b60_0)" stroke="#000" stroke-width="1.3"/>
<rect x="773.7" y="835.8" width="11" height="113.8" fill="url(#b60_1)" stroke="#000" stroke-width="1.3"/>
<rect x="786.3" y="825.0" width="11" height="124.6" fill="url(#b60_2)" stroke="#000" stroke-width="1.3"/>
<rect x="798.7" y="813.0" width="11" height="136.6" fill="url(#b60_3)" stroke="#000" stroke-width="1.3"/>
<rect x="811.3" y="830.1" width="11" height="119.5" fill="url(#b60_4)" stroke="#000" stroke-width="1.3"/>
<rect x="824.0" y="889.6" width="11" height="60.0" fill="url(#b60_5)" stroke="#000" stroke-width="1.3"/>
<rect x="877.0" y="903.9" width="11" height="45.7" fill="url(#b80_0)" stroke="#000" stroke-width="1.3"/>
<rect x="889.5" y="830.1" width="11" height="119.5" fill="url(#b80_1)" stroke="#000" stroke-width="1.3"/>
<rect x="902.1" y="816.2" width="11" height="133.4" fill="url(#b80_2)" stroke="#000" stroke-width="1.3"/>
<rect x="914.5" y="808.8" width="11" height="140.8" fill="url(#b80_3)" stroke="#000" stroke-width="1.3"/>
<rect x="927.1" y="836.1" width="11" height="113.5" fill="url(#b80_4)" stroke="#000" stroke-width="1.3"/>
<rect x="939.8" y="891.2" width="11" height="58.4" fill="url(#b80_5)" stroke="#000" stroke-width="1.3"/>
<rect x="993.0" y="882.2" width="11" height="67.4" fill="url(#b100_0)" stroke="#000" stroke-width="1.3"/>
<rect x="1005.5" y="843.2" width="11" height="106.4" fill="url(#b100_1)" stroke="#000" stroke-width="1.3"/>
<rect x="1018.1" y="825.0" width="11" height="124.6" fill="url(#b100_2)" stroke="#000" stroke-width="1.3"/>
<rect x="1030.5" y="818.1" width="11" height="131.5" fill="url(#b100_3)" stroke="#000" stroke-width="1.3"/>
<rect x="1043.1" y="845.1" width="11" height="104.5" fill="url(#b100_4)" stroke="#000" stroke-width="1.3"/>
<rect x="1055.8" y="923.3" width="11" height="26.3" fill="url(#b100_5)" stroke="#000" stroke-width="1.3"/>
<path d="M402 768.7H1098" stroke="#e81818" stroke-width="1.9"/>
<path d="M402 859.3H1098" stroke="#f0f000" stroke-width="1.7"/>
<path d="M402 895.5H1098" stroke="#008800" stroke-width="1.6"/>
<path d="M402 950V680H1098V950" fill="none" stroke="#9a9a9a" stroke-width="2"/>
<path d="M401 949.6H1099" stroke="#b4b4b4" stroke-width="2"/>
<path d="M401.8 950v6.5M517.9 950v6.5M634.0 950v6.5M750.1 950v6.5M866.2 950v6.5M982.3 950v6.5M1098.4 950v6.5" stroke="#e0e0e0" stroke-width="1.5"/>
<text x="459.0" y="967.5" font-size="16.5" fill="#e0e0e0" text-anchor="middle">100</text>
<text x="575.3" y="967.5" font-size="16.5" fill="#e0e0e0" text-anchor="middle">20%</text>
<text x="691.6" y="967.5" font-size="16.5" fill="#e0e0e0" text-anchor="middle">40%</text>
<text x="807.9" y="967.5" font-size="16.5" fill="#e0e0e0" text-anchor="middle">60%</text>
<text x="924.2" y="967.5" font-size="16.5" fill="#e0e0e0" text-anchor="middle">80%</text>
<text x="1040.5" y="967.5" font-size="16.5" fill="#e0e0e0" text-anchor="middle">100%</text>
<path d="M1120.800 104H1916V726H1120.800zM1128.300 111.200V718.800H1911.200V111.200z" fill="#000" fill-rule="evenodd"/>
<text x="1520" y="130.8" font-size="15.5" fill="#e0e0e0" text-anchor="middle" textLength="87" lengthAdjust="spacingAndGlyphs">CIE 1931 xy</text>
<rect x="1162" y="137" width="745" height="551" fill="#242424"/>
</svg>
<div class="cie" style="left:1164px;top:150px;width:640px;height:528px;clip-path:polygon(157.2px 524.8px,147.1px 524.8px,141.1px 520.8px,135.0px 513.7px,127.0px 501.6px,116.9px 485.5px,106.8px 469.3px,95.7px 449.1px,83.5px 426.9px,71.4px 402.7px,60.3px 378.5px,50.2px 354.2px,40.1px 330.0px,29.7px 299.6px,18.0px 266.0px,7.9px 215.5px,4.5px 185.0px,1.6px 138.8px,1.6px 110.0px,3.5px 81.2px,8.3px 62.0px,16.0px 42.7px,26.6px 25.4px,39.0px 12.0px,50.6px 4.2px,62.0px 2.0px,87.0px 2.0px,110.0px 6.0px,135.0px 13.5px,164.0px 25.4px,202.5px 44.6px,236.0px 64.5px,316.8px 116.6px,397.5px 175.2px,458.0px 219.6px,510.6px 260.0px,554.0px 292.0px,588.4px 317.2px,611.2px 334.3px,625.8px 345.3px,635.7px 353.4px)"><i style="background:linear-gradient(90deg,#00ff00 60px,#00ff00 89px)"></i><i style="background:linear-gradient(90deg,#00ff00 49px,#00ff00 101px)"></i><i style="background:linear-gradient(90deg,#00ff00 45px,#00ff00 112px)"></i><i style="background:linear-gradient(90deg,#00ff00 42px,#00ff00 119px)"></i><i style="background:linear-gradient(90deg,#00ff00 39px,#00ff00 126px)"></i><i style="background:linear-gradient(90deg,#00ff00 37px,#00ff00 132px)"></i><i style="background:linear-gradient(90deg,#00ff01 35px,#00ff00 139px)"></i><i style="background:linear-gradient(90deg,#00ff02 33px,#00ff00 144px)"></i><i style="background:linear-gradient(90deg,#00ff03 31px,#00ff00 148px)"></i><i style="background:linear-gradient(90deg,#00ff04 29px,#00ff00 98px,#00ff00 153px)"></i><i style="background:linear-gradient(90deg,#00ff06 27px,#00ff00 87px,#00ff00 158px)"></i><i style="background:linear-gradient(90deg,#00ff07 25px,#00ff00 86px,#00ff00 163px)"></i><i style="background:linear-gradient(90deg,#00ff08 24px,#00ff00 87px,#00ff00 168px)"></i><i style="background:linear-gradient(90deg,#00ff08 23px,#00ff00 88px,#00ff00 172px)"></i><i style="background:linear-gradient(90deg,#00ff0a 21px,#00ff00 90px,#00ff00 176px)"></i><i style="background:linear-gradient(90deg,#00ff0a 20px,#00ff00 93px,#00ff00 180px)"></i><i style="background:linear-gradient(90deg,#00ff0b 19px,#00ff00 95px,#00ff00 184px)"></i><i style="background:linear-gradient(90deg,#00ff0c 18px,#00ff00 98px,#00ff00 188px)"></i><i style="background:linear-gradient(90deg,#00ff0d 16px,#00ff00 101px,#00ff00 192px)"></i><i style="background:linear-gradient(90deg,#00ff0e 15px,#00ff00 104px,#00ff00 196px)"></i><i style="background:linear-gradient(90deg,#00ff0f 14px,#00ff00 107px,#00ff00 200px)"></i><i style="background:linear-gradient(90deg,#00ff10 13px,#00ff00 110px,#00ff00 204px)"></i><i style="background:linear-gradient(90deg,#00ff11 12px,#00ff00 113px,#00ff00 207px)"></i><i style="background:linear-gradient(90deg,#00ff12 11px,#00ff00 116px,#00ff00 211px)"></i><i style="background:linear-gradient(90deg,#00ff13 11px,#00ff00 120px,#00ff00 214px)"></i><i style="background:linear-gradient(90deg,#00ff14 10px,#00ff00 123px,#00ff00 217px)"></i><i style="background:linear-gradient(90deg,#00ff15 9px,#00ff00 126px,#00ff00 221px)"></i><i style="background:linear-gradient(90deg,#00ff16 8px,#00ff00 129px,#00ff00 224px)"></i><i style="background:linear-gradient(90deg,#00ff17 7px,#00ff00 132px,#00ff00 228px)"></i><i style="background:linear-gradient(90deg,#00ff18 7px,#00ff00 136px,#00ff00 231px)"></i><i style="background:linear-gradient(90deg,#00ff19 6px,#00ff00 139px,#00ff00 234px)"></i><i style="background:linear-gradient(90deg,#00ff1a 5px,#00ff00 142px,#00ff00 238px)"></i><i style="background:linear-gradient(90deg,#00ff1b 5px,#00ff00 145px,#00ff00 241px)"></i><i style="background:linear-gradient(90deg,#00ff1c 4px,#00ff00 149px,#00ff00 244px)"></i><i style="background:linear-gradient(90deg,#00ff1c 4px,#00ff00 152px,#00ff00 247px)"></i><i style="background:linear-gradient(90deg,#00ff1e 3px,#00ff00 155px,#00ff00 250px)"></i><i style="background:linear-gradient(90deg,#00ff1e 3px,#00ff00 159px,#00ff00 253px)"></i><i style="background:linear-gradient(90deg,#00ff1f 2px,#00ff00 162px,#00ff00 256px)"></i><i style="background:linear-gradient(90deg,#00ff20 2px,#00ff00 165px,#00ff00 259px)"></i><i style="background:linear-gradient(90deg,#00ff21 1px,#00ff00 169px,#00ff00 263px)"></i><i style="background:linear-gradient(90deg,#00ff22 1px,#00ff00 172px,#00ff00 266px)"></i><i style="background:linear-gradient(90deg,#00ff23 1px,#00ff00 175px,#00ff00 269px)"></i><i style="background:linear-gradient(90deg,#00ff24 1px,#00ff00 178px,#00ff00 272px)"></i><i style="background:linear-gradient(90deg,#00ff25 1px,#00ff00 182px,#00ff00 275px)"></i><i style="background:linear-gradient(90deg,#00ff26 0px,#00ff00 185px,#00ff00 278px)"></i><i style="background:linear-gradient(90deg,#00ff27 0px,#00ff00 188px,#00ff00 281px)"></i><i style="background:linear-gradient(90deg,#00ff28 0px,#00ff00 192px,#02ff00 284px)"></i><i style="background:linear-gradient(90deg,#00ff29 0px,#00ff00 195px,#03ff00 284px,#06ff00 287px)"></i><i style="background:linear-gradient(90deg,#00ff2a 0px,#00ff00 198px,#03ff00 283px,#0bff00 290px)"></i><i style="background:linear-gradient(90deg,#00ff2b 0px,#00ff00 202px,#02ff00 282px,#10ff00 294px)"></i><i style="background:linear-gradient(90deg,#00ff2c 0px,#00ff00 205px,#02ff00 281px,#15ff00 297px)"></i><i style="background:linear-gradient(90deg,#00ff2d 0px,#00ff00 208px,#03ff00 281px,#1aff00 300px)"></i><i style="background:linear-gradient(90deg,#00ff2e 0px,#00ff00 211px,#03ff00 280px,#1eff00 303px)"></i><i style="background:linear-gradient(90deg,#00ff2f 0px,#00ff00 215px,#02ff00 279px,#23ff00 306px)"></i><i style="background:linear-gradient(90deg,#00ff30 0px,#00ff00 218px,#02ff00 278px,#28ff00 309px)"></i><i style="background:linear-gradient(90deg,#00ff31 0px,#00ff00 222px,#03ff00 278px,#2dff00 312px)"></i><i style="background:linear-gradient(90deg,#00ff32 0px,#00ff00 225px,#03ff00 277px,#32ff00 315px)"></i><i style="background:linear-gradient(90deg,#00ff33 0px,#00ff00 228px,#03ff00 276px,#37ff00 318px)"></i><i style="background:linear-gradient(90deg,#00ff34 0px,#00ff00 232px,#02ff00 275px,#3dff00 321px)"></i><i style="background:linear-gradient(90deg,#00ff35 0px,#00ff01 218px,#03ff00 275px,#42ff00 324px)"></i><i style="background:linear-gradient(90deg,#00ff36 0px,#00ff02 218px,#03ff00 274px,#48ff00 327px)"></i><i style="background:linear-gradient(90deg,#00ff37 0px,#00ff04 217px,#03ff00 273px,#4cff00 329px)"></i><i style="background:linear-gradient(90deg,#00ff38 0px,#00ff05 217px,#00ff00 260px,#04ff00 273px,#52ff00 332px)"></i><i style="background:linear-gradient(90deg,#00ff39 0px,#00ff06 216px,#00ff00 256px,#03ff00 272px,#58ff00 335px)"></i><i style="background:linear-gradient(90deg,#00ff3a 0px,#00ff07 216px,#00ff00 255px,#03ff00 271px,#5eff00 338px)"></i><i style="background:linear-gradient(90deg,#00ff3b 0px,#00ff08 215px,#00ff00 257px,#04ff00 271px,#64ff00 341px)"></i><i style="background:linear-gradient(90deg,#00ff3d 0px,#00ff0a 215px,#00ff00 260px,#04ff00 270px,#69ff00 343px)"></i><i style="background:linear-gradient(90deg,#00ff3e 0px,#00ff0b 214px,#00ff00 262px,#07ff00 272px,#6fff00 346px)"></i><i style="background:linear-gradient(90deg,#00ff3f 0px,#00ff0c 214px,#00ff00 265px,#65ff00 338px,#76ff00 349px)"></i><i style="background:linear-gradient(90deg,#00ff40 0px,#00ff0e 213px,#03ff00 267px,#70ff00 344px,#7dff00 352px)"></i><i style="background:linear-gradient(90deg,#00ff41 0px,#00ff0f 213px,#02ff00 266px,#6fff00 342px,#82ff00 354px)"></i><i style="background:linear-gradient(90deg,#00ff42 0px,#00ff10 212px,#02ff00 265px,#6fff00 341px,#89ff00 357px)"></i><i style="background:linear-gradient(90deg,#00ff44 0px,#00ff11 212px,#03ff00 265px,#73ff00 342px,#91ff00 360px)"></i><i style="background:linear-gradient(90deg,#00ff45 0px,#00ff13 211px,#03ff00 265px,#7bff00 346px,#98ff00 363px)"></i><i style="background:linear-gradient(90deg,#00ff46 0px,#00ff14 211px,#03ff01 265px,#80ff00 348px,#9eff00 365px)"></i><i style="background:linear-gradient(90deg,#00ff47 0px,#00ff16 210px,#02ff02 264px,#88ff00 351px,#a6ff00 368px)"></i><i style="background:linear-gradient(90deg,#00ff48 0px,#00ff17 210px,#02ff03 263px,#86ff00 349px,#aeff00 371px)"></i><i style="background:linear-gradient(90deg,#00ff4a 0px,#00ff19 209px,#01ff05 262px,#52ff00 316px,#b6ff00 374px)"></i><i style="background:linear-gradient(90deg,#00ff4b 0px,#00ff1a 209px,#01ff07 261px,#40ff00 303px,#afff00 369px,#bcff00 376px)"></i><i style="background:linear-gradient(90deg,#00ff4c 0px,#00ff1b 209px,#02ff07 261px,#44ff00 305px,#b6ff00 371px,#c5ff00 379px)"></i><i style="background:linear-gradient(90deg,#00ff4d 0px,#00ff1d 208px,#02ff09 260px,#1eff02 280px,#a5ff00 361px,#ceff00 382px)"></i><i style="background:linear-gradient(90deg,#00ff4f 1px,#00ff1e 208px,#02ff0b 259px,#15ff04 274px,#a8ff00 361px,#d7ff00 385px)"></i><i style="background:linear-gradient(90deg,#00ff50 1px,#00ff20 208px,#01ff0d 258px,#12ff05 272px,#92ff00 348px,#deff00 387px)"></i><i style="background:linear-gradient(90deg,#00ff51 1px,#00ff21 208px,#02ff0e 258px,#13ff06 272px,#86ff00 340px,#e8ff00 390px)"></i><i style="background:linear-gradient(90deg,#00ff53 1px,#00ff23 207px,#02ff10 257px,#12ff07 271px,#81ff00 336px,#f2ff00 393px)"></i><i style="background:linear-gradient(90deg,#00ff54 1px,#00ff24 207px,#02ff12 256px,#11ff08 270px,#82ff00 335px,#f5ff00 393px,#fcff00 396px)"></i><i style="background:linear-gradient(90deg,#00ff55 1px,#00ff26 206px,#02ff13 256px,#13ff08 271px,#88ff00 337px,#fbff00 394px,#fffa00 398px)"></i><i style="background:linear-gradient(90deg,#00ff57 1px,#00ff27 206px,#02ff15 255px,#12ff09 270px,#8cff00 338px,#fffd00 395px,#fff000 401px)"></i><i style="background:linear-gradient(90deg,#00ff58 1px,#00ff29 206px,#02ff17 254px,#13ff0a 270px,#90ff00 339px,#fffe00 393px,#ffe700 404px)"></i><i style="background:linear-gradient(90deg,#00ff59 2px,#00ff2a 206px,#02ff19 253px,#14ff0b 270px,#98ff00 342px,#fffc00 392px,#ffde00 407px)"></i><i style="background:linear-gradient(90deg,#00ff5b 2px,#00ff2c 206px,#02ff1a 253px,#15ff0c 270px,#9fff00 344px,#fffd00 390px,#ffd700 409px)"></i><i style="background:linear-gradient(90deg,#00ff5c 2px,#00ff2e 205px,#02ff1c 252px,#16ff0e 270px,#a6ff00 346px,#fffe00 388px,#ffcf00 412px)"></i><i style="background:linear-gradient(90deg,#00ff5e 2px,#00ff2f 205px,#02ff1e 251px,#17ff0f 270px,#acff00 348px,#fffc00 387px,#ffc700 415px)"></i><i style="background:linear-gradient(90deg,#00ff5f 2px,#00ff31 204px,#02ff20 250px,#18ff10 270px,#a5ff00 343px,#fffd00 385px,#ffc200 416px,#ffc100 417px)"></i><i style="background:linear-gradient(90deg,#00ff61 2px,#00ff33 204px,#02ff21 250px,#19ff11 270px,#9fff00 339px,#fffe00 383px,#ffc400 413px,#ffb900 420px)"></i><i style="background:linear-gradient(90deg,#00ff62 3px,#00ff34 205px,#02ff23 249px,#1aff12 270px,#a2ff01 339px,#fffd00 382px,#ffc300 412px,#ffb200 423px)"></i><i style="background:linear-gradient(90deg,#00ff64 3px,#00ff36 204px,#02ff25 248px,#1bff13 270px,#a2ff02 338px,#fffe00 380px,#ffc300 410px,#ffac00 426px)"></i><i style="background:linear-gradient(90deg,#00ff65 3px,#00ff38 204px,#02ff26 248px,#1eff14 271px,#a5ff02 338px,#fffc00 379px,#ffc200 409px,#ffa700 428px)"></i><i style="background:linear-gradient(90deg,#00ff67 3px,#00ff39 204px,#02ff29 247px,#1dff16 270px,#a5ff04 337px,#fffd00 377px,#ffc200 407px,#ffa000 431px)"></i><i style="background:linear-gradient(90deg,#00ff68 3px,#00ff3b 203px,#02ff2b 246px,#1eff17 270px,#a5ff05 336px,#fffe00 375px,#ffc400 404px,#ff9a00 434px)"></i><i style="background:linear-gradient(90deg,#00ff6a 4px,#00ff3d 204px,#02ff2d 245px,#1fff19 270px,#a6ff06 335px,#fffc00 374px,#ffc200 403px,#ff9500 437px)"></i><i style="background:linear-gradient(90deg,#00ff6b 4px,#00ff3f 204px,#03ff2f 245px,#21ff1a 270px,#a6ff07 334px,#fffd00 372px,#ffc300 401px,#ff9000 439px)"></i><i style="background:linear-gradient(90deg,#00ff6d 4px,#00ff41 203px,#02ff31 244px,#22ff1b 270px,#a9ff09 334px,#fffe00 370px,#ffc300 399px,#ff8e00 439px,#fe8b00 442px)"></i><i style="background:linear-gradient(90deg,#00ff6f 4px,#00ff43 203px,#02ff33 243px,#23ff1d 270px,#aaff0a 333px,#fffc00 369px,#ffc200 398px,#ff8d00 438px,#fd8500 445px)"></i><i style="background:linear-gradient(90deg,#00ff70 5px,#00ff44 204px,#03ff35 243px,#24ff1f 270px,#aaff0c 332px,#fffd02 367px,#ffc400 395px,#ff8f00 434px,#fc8000 447px)"></i><i style="background:linear-gradient(90deg,#00ff72 5px,#00ff46 203px,#03ff37 242px,#26ff20 270px,#abff0d 331px,#fffe03 365px,#ffc400 393px,#ff8f00 432px,#fb7b00 450px)"></i><i style="background:linear-gradient(90deg,#00ff74 5px,#00ff48 203px,#02ff3a 241px,#25ff22 269px,#acff0f 330px,#fffc04 364px,#ffc400 391px,#ff9000 429px,#fa7500 453px)"></i><i style="background:linear-gradient(90deg,#00ff75 5px,#00ff4a 203px,#02ff3c 240px,#27ff24 269px,#acff11 329px,#fffd06 362px,#ffc600 388px,#ff9100 426px,#f87000 456px)"></i><i style="background:linear-gradient(90deg,#00ff77 6px,#00ff4c 204px,#03ff3e 240px,#28ff25 269px,#adff12 328px,#fffe08 360px,#ffc800 385px,#ff9200 423px,#f76d00 458px)"></i><i style="background:linear-gradient(90deg,#00ff79 6px,#00ff4e 203px,#03ff40 239px,#2aff27 269px,#aeff14 327px,#fffd09 359px,#ffc601 384px,#ff8f00 423px,#f66800 461px)"></i><i style="background:linear-gradient(90deg,#00ff7b 6px,#00ff50 203px,#03ff43 238px,#29ff29 268px,#acff17 325px,#fffe0c 357px,#ffc602 382px,#ff8e00 422px,#f56300 464px)"></i><i style="background:linear-gradient(90deg,#00ff7c 7px,#00ff52 204px,#03ff44 238px,#2dff2b 269px,#b2ff18 326px,#fffc0d 356px,#ffc504 381px,#ff8c00 422px,#f46000 466px)"></i><i style="background:linear-gradient(90deg,#00ff7e 7px,#00ff54 204px,#03ff47 237px,#2cff2d 268px,#aeff1b 323px,#fffd10 354px,#ffc605 378px,#ff9200 414px,#f35c00 468px,#f25c00 469px)"></i><i style="background:linear-gradient(90deg,#00ff80 8px,#00ff56 204px,#03ff4a 236px,#2cff30 267px,#a7ff1e 319px,#fffe12 352px,#ffc607 376px,#ff9600 409px,#f76900 451px,#f15800 471px)"></i><i style="background:linear-gradient(90deg,#00ff82 8px,#00ff58 204px,#03ff4c 235px,#2cff33 266px,#9dff22 314px,#fffc14 351px,#ffc508 375px,#ff9600 407px,#f86b00 446px,#f05400 474px)"></i><i style="background:linear-gradient(90deg,#00ff84 8px,#00ff5b 204px,#03ff4e 235px,#2eff35 266px,#9eff24 313px,#fffd17 349px,#ffc50a 373px,#ff9501 405px,#f96c00 443px,#ef5000 477px)"></i><i style="background:linear-gradient(90deg,#00ff85 9px,#00ff5d 205px,#03ff51 234px,#2cff39 264px,#87ff2a 303px,#fffe19 347px,#ffc70c 370px,#ff9602 402px,#f96d00 440px,#ee4d00 479px)"></i><i style="background:linear-gradient(90deg,#00ff87 9px,#00ff5f 205px,#03ff54 233px,#2cff3c 263px,#76ff2f 295px,#fffc1b 346px,#ffc50e 369px,#ff9403 401px,#f96c00 439px,#ec4a00 482px)"></i><i style="background:linear-gradient(90deg,#00ff89 10px,#00ff61 206px,#03ff57 232px,#2cff3f 262px,#67ff33 288px,#ecff21 337px,#fffd1e 344px,#ffc510 367px,#ff9504 398px,#f96c00 437px,#eb4700 484px)"></i><i style="background:linear-gradient(90deg,#00ff8b 10px,#00ff63 206px,#04ff59 232px,#2eff41 262px,#67ff36 287px,#eeff24 336px,#fffb21 343px,#ffc311 366px,#ff9305 397px,#f96a00 436px,#ea4400 487px)"></i><i style="background:linear-gradient(90deg,#00ff8d 10px,#00ff66 206px,#03ff5c 231px,#2eff44 261px,#62ff39 284px,#e6ff28 332px,#fffc24 341px,#ffc313 364px,#ff9207 395px,#fa6a00 434px,#e94100 490px)"></i><i style="background:linear-gradient(90deg,#00ff8f 11px,#00ff68 207px,#03ff5f 230px,#2cff48 259px,#5aff3d 280px,#dfff2c 328px,#fffd27 339px,#ffc616 361px,#ff9409 391px,#fa6b00 431px,#e84000 489px,#e83e00 492px)"></i><i style="background:linear-gradient(90deg,#00ff91 11px,#00ff6b 207px,#03ff62 229px,#2dff4c 258px,#5aff40 279px,#ddff2f 326px,#fffb29 338px,#ffc418 360px,#ff930a 390px,#fa6901 430px,#e73d00 492px,#e63b00 495px)"></i><i style="background:linear-gradient(90deg,#00ff93 12px,#00ff6d 208px,#04ff64 229px,#2eff4e 258px,#5dff43 279px,#e2ff31 326px,#fffd2d 336px,#ffc41b 358px,#ff920c 388px,#fa6701 429px,#e63a00 494px,#e53800 497px)"></i><i style="background:linear-gradient(90deg,#00ff96 12px,#00ff70 208px,#03ff67 228px,#2eff52 257px,#5dff46 278px,#e0ff35 324px,#fffe30 334px,#ffc41d 356px,#ff920d 386px,#fb6602 427px,#e53800 495px,#e43600 500px)"></i><i style="background:linear-gradient(90deg,#00ff98 12px,#00ff72 209px,#03ff6a 227px,#2dff56 255px,#5dff49 277px,#dfff38 322px,#fffc33 333px,#ffc21f 355px,#ff900f 385px,#fb6503 426px,#e53600 496px,#e33300 503px)"></i><i style="background:linear-gradient(90deg,#00ff9a 13px,#00ff74 210px,#04ff6d 227px,#30ff58 256px,#62ff4b 278px,#e7ff3b 323px,#fffd37 331px,#ffc423 352px,#ff9211 381px,#fb6304 425px,#e43400 498px,#e23100 505px)"></i><i style="background:linear-gradient(90deg,#00ff9c 13px,#00ff77 210px,#04ff70 226px,#2fff5c 254px,#63ff4e 277px,#e6ff3e 321px,#fffe3b 329px,#ffc525 350px,#ff9314 378px,#fb6205 423px,#e33300 498px,#e02e00 508px)"></i><i style="background:linear-gradient(90deg,#00ff9e 14px,#00ff7a 211px,#05ff73 226px,#30ff5f 254px,#65ff51 277px,#e7ff42 320px,#fffc3e 328px,#ffc327 349px,#ff9015 378px,#fb6105 422px,#e33200 497px,#df2c00 510px)"></i><i style="background:linear-gradient(90deg,#00ffa1 14px,#00ff7c 212px,#04ff76 225px,#31ff63 253px,#68ff55 277px,#edff45 320px,#fffd42 326px,#ffc32a 347px,#ff9117 375px,#fb6007 420px,#e53400 489px,#de2a00 513px)"></i><i style="background:linear-gradient(90deg,#00ffa3 14px,#00ff7f 212px,#05ff79 225px,#33ff66 253px,#6cff58 277px,#efff48 319px,#fffb45 325px,#ffc12d 346px,#ff8f19 374px,#fb5e07 419px,#e63500 484px,#dd2700 516px)"></i><i style="background:linear-gradient(90deg,#00ffa5 15px,#00ff82 214px,#09ff7a 227px,#3bff67 256px,#74ff5a 279px,#f8ff4b 320px,#fffc49 323px,#ffc331 343px,#ff911c 370px,#fe640b 410px,#ed4000 461px,#db2500 519px)"></i><i style="background:linear-gradient(90deg,#00ffa8 15px,#00ff85 214px,#0aff7d 227px,#3dff6a 256px,#78ff5e 279px,#faff4f 319px,#fff64b 323px,#ffbd31 344px,#ff8b1c 372px,#fc5c0a 416px,#ea3a00 469px,#da2300 521px)"></i><i style="background:linear-gradient(90deg,#00ffaa 16px,#00ff88 216px,#19ff7a 236px,#57ff67 266px,#beff5a 300px,#ffff53 319px,#ffc438 339px,#ff9021 366px,#ff650e 404px,#ef3f02 455px,#d92100 524px)"></i><i style="background:linear-gradient(90deg,#00ffad 16px,#00ff8b 216px,#1fff7b 239px,#62ff69 269px,#daff5b 307px,#fffc56 318px,#ffc23a 338px,#ff8e22 365px,#ff630f 403px,#ef3e03 454px,#d81f00 527px)"></i><i style="background:linear-gradient(90deg,#00ffaf 17px,#00ff8e 215px,#1eff80 237px,#60ff6e 267px,#cbff61 301px,#fffe5b 316px,#ffc43f 335px,#ff9126 361px,#ff6512 398px,#ef3d03 451px,#d71d00 529px)"></i><i style="background:linear-gradient(90deg,#00ffb1 18px,#00ff91 215px,#21ff83 238px,#63ff72 267px,#d0ff65 301px,#ffff60 314px,#ffc543 333px,#ff9129 359px,#ff6514 395px,#f03d04 448px,#d51b00 532px)"></i><i style="background:linear-gradient(90deg,#00ffb4 18px,#00ff95 214px,#1fff87 236px,#61ff77 265px,#c0ff6b 295px,#fffc63 313px,#ffc245 332px,#ff8f2b 358px,#ff6316 394px,#f03b05 448px,#d41900 535px)"></i><i style="background:linear-gradient(90deg,#00ffb7 19px,#01ff98 214px,#23ff8a 237px,#67ff7a 266px,#ccff6f 297px,#fffe69 311px,#ffc54b 329px,#ff912f 354px,#ff6519 389px,#f6440a 429px,#df2400 499px,#d31700 538px)"></i><i style="background:linear-gradient(90deg,#00ffb9 20px,#00ff9c 213px,#23ff8f 236px,#67ff7f 265px,#c7ff74 294px,#ffff6f 309px,#ffc34d 328px,#ff8f31 353px,#ff631a 388px,#f7450c 425px,#e22700 489px,#d21600 540px)"></i><i style="background:linear-gradient(90deg,#00ffbc 20px,#01ff9f 213px,#25ff93 236px,#68ff84 264px,#bdff7a 290px,#fffd72 308px,#ffc352 326px,#ff8f34 351px,#ff621c 386px,#f8450e 421px,#e32601 484px,#d01400 543px)"></i><i style="background:linear-gradient(90deg,#00ffbf 21px,#01ffa3 212px,#25ff97 235px,#69ff89 263px,#b8ff7f 287px,#fffe78 306px,#ffc456 324px,#ff9038 348px,#ff631f 382px,#f94610 417px,#e42602 479px,#cf1300 546px)"></i><i style="background:linear-gradient(90deg,#00ffc1 22px,#02ffa7 212px,#27ff9b 235px,#6cff8d 263px,#bdff84 287px,#feff7e 304px,#ffc159 323px,#ff8e3a 347px,#ff6221 381px,#fa4511 415px,#e52503 477px,#ce1100 548px)"></i><i style="background:linear-gradient(90deg,#00ffc4 22px,#02ffab 212px,#2bff9f 236px,#73ff91 264px,#caff88 289px,#fffd83 303px,#ffc15d 321px,#ff8e3e 345px,#ff6123 379px,#fa4312 414px,#e52403 476px,#cd1000 551px)"></i><i style="background:linear-gradient(90deg,#00ffc7 23px,#02ffaf 211px,#29ffa4 234px,#6eff97 261px,#bcff8f 284px,#fffe89 301px,#ffc564 318px,#ff9143 341px,#ff6327 374px,#fa4214 412px,#e52304 474px,#cc0e00 554px)"></i><i style="background:linear-gradient(90deg,#00ffca 24px,#03ffb3 211px,#2dffa8 235px,#74ff9c 262px,#c5ff94 285px,#fffc8d 300px,#ffc267 317px,#ff8f46 340px,#ff6129 373px,#fb4115 411px,#e52204 473px,#ca0d00 556px)"></i><i style="background:linear-gradient(90deg,#00ffcd 25px,#03ffb7 210px,#2bffad 233px,#72ffa2 260px,#c3ff99 283px,#fffd94 298px,#ffc26c 315px,#ff8e49 338px,#ff612c 370px,#fb3f16 410px,#e52005 473px,#c90b00 559px)"></i><i style="background:linear-gradient(90deg,#00ffd0 25px,#02ffbc 209px,#2bffb2 232px,#73ffa7 259px,#c5ff9f 282px,#ffff9b 296px,#ffc371 313px,#ff904e 335px,#ff6330 366px,#fb3d17 409px,#e51f05 472px,#c80a00 562px)"></i><i style="background:linear-gradient(90deg,#00ffd3 26px,#02ffc0 208px,#29ffb8 230px,#6effae 256px,#bfffa6 279px,#fffca0 295px,#ffc075 312px,#ff8d51 334px,#ff6131 365px,#fb3c18 408px,#e51e06 471px,#c70900 565px)"></i><i style="background:linear-gradient(90deg,#00ffd6 27px,#03ffc4 208px,#2dffbc 231px,#75ffb3 257px,#c9ffab 280px,#fffea7 293px,#ffc47d 309px,#ff8f56 331px,#ff6135 362px,#fb3a1a 407px,#e51c06 471px,#c60800 567px)"></i><i style="background:linear-gradient(90deg,#00ffda 27px,#03ffc9 207px,#2bffc2 229px,#72ffb9 255px,#c7ffb2 278px,#ffffaf 291px,#ffc482 307px,#ff905b 328px,#ff6239 358px,#fc391b 405px,#e61b07 468px,#c50600 569px,#c40600 570px)"></i><i style="background:linear-gradient(90deg,#00ffdd 28px,#03ffce 206px,#2bffc7 228px,#70ffc0 253px,#c4ffb9 276px,#fffcb4 290px,#ffc186 306px,#ff8e5e 327px,#ff603b 357px,#fc381d 404px,#e51a08 468px,#c40600 570px,#c30500 573px)"></i><i style="background:linear-gradient(90deg,#00ffe0 29px,#02ffd3 205px,#2bffcd 227px,#71ffc6 252px,#c6ffc0 275px,#fffebc 288px,#ffc28c 304px,#ff8e62 325px,#ff5f3e 355px,#fd371f 401px,#e71909 464px,#c50600 565px,#c20400 576px)"></i><i style="background:linear-gradient(90deg,#00ffe4 29px,#02ffd8 204px,#29ffd3 225px,#6effcd 250px,#c8ffc7 274px,#feffc5 286px,#ffc292 302px,#ff8d67 323px,#ff6042 352px,#ff3923 395px,#ea1b0c 455px,#c70600 556px,#c10300 578px)"></i><i style="background:linear-gradient(90deg,#00ffe7 30px,#03ffdd 204px,#2bffd8 225px,#73ffd3 250px,#caffce 273px,#fffdca 285px,#ffc399 300px,#ff8f6d 320px,#ff6147 348px,#ff3a26 390px,#eb1b0e 450px,#cb0800 544px,#bf0200 581px)"></i><i style="background:linear-gradient(90deg,#00ffeb 31px,#03ffe2 203px,#2bffde 224px,#70ffda 248px,#c8ffd5 271px,#fffed3 283px,#ffc3a0 298px,#ff8f72 318px,#ff604a 346px,#ff3a29 387px,#ec1a0f 448px,#cb0700 543px,#be0100 584px)"></i><i style="background:linear-gradient(90deg,#00ffee 31px,#02ffe7 202px,#2bffe4 223px,#71ffe1 247px,#caffdd 270px,#feffdc 281px,#ffc0a4 297px,#ff8c75 317px,#ff5e4c 345px,#ff382b 386px,#ec1810 447px,#ca0500 543px,#bd0000 587px)"></i><i style="background:linear-gradient(90deg,#00fff2 32px,#02ffed 201px,#29ffeb 221px,#6fffe8 245px,#c8ffe5 268px,#fffde2 280px,#ffc1ab 295px,#ff8c7a 315px,#ff5d50 343px,#ff372d 384px,#ec1710 446px,#ca0401 544px,#bc0000 589px)"></i><i style="background:linear-gradient(90deg,#00fff6 33px,#02fff2 200px,#29fff1 220px,#6fffef 244px,#cbffed 267px,#ffffec 278px,#ffc5b5 292px,#ff9083 311px,#ff6057 338px,#ff3932 377px,#f9241f 410px,#de0b08 485px,#ba0000 592px)"></i><i style="background:linear-gradient(90deg,#00fffa 33px,#03fff8 200px,#2bfff7 220px,#70fff6 243px,#c8fff6 265px,#fdfff5 276px,#ffbeb6 292px,#ff8b84 311px,#ff5d58 338px,#ff3632 378px,#f8211f 412px,#dc0908 489px,#b90000 595px)"></i><i style="background:linear-gradient(90deg,#00fffe 34px,#03fffe 199px,#2bfffe 219px,#71fffe 242px,#cbfffe 264px,#fffefd 275px,#ffc2c1 289px,#ff8d8c 308px,#ff5f5e 334px,#ff3838 372px,#fa2222 406px,#e00a0a 480px,#ba0000 591px,#b80000 597px)"></i><i style="background:linear-gradient(90deg,#00fcff 35px,#02faff 198px,#2af9ff 218px,#6ff9ff 241px,#c7f8ff 263px,#fff5fd 275px,#ffbcc3 289px,#ff888e 308px,#ff5b60 334px,#ff3538 373px,#fa2124 406px,#df090b 480px,#b90000 591px,#b70000 600px)"></i><i style="background:linear-gradient(90deg,#00f9ff 36px,#02f5ff 197px,#29f3ff 217px,#70f1ff 241px,#cbefff 264px,#ffedfe 275px,#ffb6c4 289px,#ff848f 308px,#ff5760 335px,#ff3239 374px,#fa1f25 407px,#df080c 482px,#b80000 594px,#b50000 603px)"></i><i style="background:linear-gradient(90deg,#00f5ff 36px,#03efff 197px,#2dedff 218px,#74eaff 242px,#d0e7ff 265px,#ffe5ff 275px,#ffb0c5 289px,#ff7f91 308px,#ff5462 335px,#ff303b 374px,#f91d26 407px,#de070d 482px,#b80000 594px,#b40000 605px)"></i><i style="background:linear-gradient(90deg,#00f1ff 37px,#02eaff 196px,#2be6ff 217px,#72e3ff 241px,#cbdfff 264px,#ffddff 275px,#ffa7c3 290px,#ff778e 310px,#ff4e5f 338px,#ff2b39 379px,#f51722 418px,#d8040a 500px,#b30000 608px)"></i><i style="background:linear-gradient(90deg,#00edff 38px,#02e4ff 195px,#2ae0ff 216px,#6fdcff 240px,#c7d7ff 263px,#fed5ff 275px,#ff9fc1 291px,#ff718d 311px,#ff4a60 339px,#ff2839 381px,#ee0f1b 438px,#cc0007 532px,#b20000 611px)"></i><i style="background:linear-gradient(90deg,#00e9ff 38px,#03dfff 195px,#2bdaff 216px,#73d5ff 241px,#cbcfff 264px,#feceff 275px,#ff96bf 292px,#ff6a8a 313px,#ff445d 342px,#ff2437 385px,#ea0c18 449px,#c60005 550px,#b10000 613px)"></i><i style="background:linear-gradient(90deg,#00e5ff 39px,#03daff 194px,#2ad5ff 215px,#71ceff 240px,#cbc8ff 264px,#ffc4fc 276px,#ff94c3 291px,#ff688e 312px,#ff4260 341px,#ff233a 384px,#eb0b1a 447px,#c70006 547px,#af0000 616px)"></i><i style="background:linear-gradient(90deg,#00e2ff 40px,#02d5ff 193px,#2bcfff 215px,#72c8ff 240px,#cbc1ff 264px,#ffbdfd 276px,#ff8cc1 292px,#ff638d 313px,#ff3e5f 343px,#ff2039 387px,#e9091a 451px,#c50006 550px,#ae0000 619px)"></i><i style="background:linear-gradient(90deg,#00deff 41px,#02d0ff 192px,#2ac9ff 214px,#6fc2ff 239px,#c7baff 263px,#ffb6fd 276px,#ff87c2 292px,#ff5f8e 313px,#ff3b61 343px,#ff1e3a 387px,#e9091c 450px,#c60007 548px,#ad0000 621px)"></i><i style="background:linear-gradient(90deg,#00daff 42px,#03cbff 192px,#2bc4ff 214px,#73bbff 240px,#c8b3ff 263px,#ffb0fe 276px,#ff82c3 292px,#ff5a8e 314px,#ff3861 344px,#ff1c3b 389px,#e9081c 452px,#c50007 551px,#ac0000 624px)"></i><i style="background:linear-gradient(90deg,#00d7ff 43px,#03c6ff 191px,#2abeff 213px,#71b5ff 239px,#c4adff 262px,#ffa9ff 276px,#ff7ec4 292px,#ff578f 314px,#ff3561 345px,#ff1a3b 391px,#e8061d 454px,#c30007 556px,#ab0000 627px)"></i><i style="background:linear-gradient(90deg,#00d3ff 43px,#02c2ff 190px,#29b9ff 212px,#6eafff 238px,#c0a7ff 261px,#ffa3ff 276px,#ff77c2 293px,#ff528f 315px,#ff3262 346px,#fe173b 393px,#e6051d 458px,#bd0004 573px,#aa0000 629px)"></i><i style="background:linear-gradient(90deg,#00cfff 44px,#03bdff 190px,#2cb3ff 213px,#72a9ff 239px,#c4a1ff 262px,#fe9dff 276px,#ff71c0 294px,#ff4c8c 317px,#ff2e60 349px,#fb1337 400px,#e3031b 468px,#af0000 612px,#a80000 632px)"></i><i style="background:linear-gradient(90deg,#00ccff 45px,#03b9ff 189px,#2bafff 212px,#73a3ff 239px,#c49bff 262px,#ff94fc 277px,#ff6cc2 294px,#ff498e 317px,#ff2b61 349px,#fb1239 400px,#e3021c 468px,#af0000 610px,#a70000 634px)"></i><i style="background:linear-gradient(90deg,#00c8ff 46px,#02b4ff 188px,#2aaaff 211px,#719eff 238px,#c195ff 261px,#ff8ffd 277px,#ff68c3 294px,#ff468f 317px,#ff2962 349px,#fb113a 400px,#e3021d 468px,#b10001 605px,#a70000 636px)"></i><i style="background:linear-gradient(90deg,#00c5ff 47px,#02b0ff 187px,#29a5ff 210px,#6e99ff 237px,#bd90ff 260px,#ff89fd 277px,#ff64c4 294px,#ff4390 317px,#ff2763 350px,#fb0f3b 400px,#e3011e 468px,#b30002 599px,#a70000 638px)"></i><i style="background:linear-gradient(90deg,#00c1ff 48px,#03acff 187px,#2ca0ff 211px,#7592ff 239px,#d189ff 265px,#ff84fe 277px,#ff60c5 294px,#ff4091 317px,#ff2564 350px,#fb0e3d 400px,#e30120 467px,#b50004 592px,#a70000 637px)"></i><i style="background:linear-gradient(90deg,#00beff 48px,#03a8ff 186px,#2b9bff 210px,#738dff 238px,#d483ff 266px,#ff7ffe 277px,#ff5ac3 295px,#ff3b8f 319px,#ff2162 353px,#fb0d3e 400px,#e30121 467px,#b80005 586px,#a80000 631px)"></i><i style="background:linear-gradient(90deg,#00bbff 49px,#02a4ff 185px,#2a97ff 209px,#7088ff 237px,#d57dff 266px,#ff7aff 277px,#ff57c4 295px,#ff3990 319px,#ff1f64 353px,#fb0c3f 400px,#e30023 466px,#ba0006 579px,#aa0001 625px)"></i><i style="background:linear-gradient(90deg,#00b7ff 50px,#039fff 185px,#2d92ff 210px,#7482ff 238px,#e777ff 271px,#ff74ff 277px,#ff53c5 295px,#ff3692 319px,#ff1d65 353px,#fb0b40 401px,#e20022 471px,#ba0007 579px,#ac0001 620px)"></i><i style="background:linear-gradient(90deg,#00b4ff 51px,#039cff 184px,#2c8dff 209px,#757dff 238px,#ef71ff 273px,#ff6dfc 278px,#ff4ec3 296px,#ff3290 321px,#ff1a63 356px,#fb0a41 401px,#de001f 480px,#b60005 593px,#ae0003 614px)"></i><i style="background:linear-gradient(90deg,#00b1ff 52px,#0298ff 183px,#2b89ff 208px,#7379ff 237px,#ef6cff 273px,#ff69fc 278px,#ff49c2 297px,#ff2e8f 322px,#ff1863 358px,#fb0943 401px,#de0020 480px,#b60006 593px,#b00003 609px)"></i><i style="background:linear-gradient(90deg,#00adff 53px,#0294ff 182px,#2a85ff 207px,#7074ff 236px,#ee67ff 273px,#ff64fd 278px,#ff46c3 297px,#ff2b8f 323px,#ff1663 359px,#fb0743 402px,#de0020 481px,#b60006 594px,#b20005 603px)"></i><i style="background:linear-gradient(90deg,#00aaff 53px,#0390ff 182px,#2d80ff 208px,#716fff 236px,#f562ff 275px,#ff5efa 279px,#ff41c1 298px,#ff288e 324px,#ff1363 361px,#fb0645 402px,#de0020 482px,#b50006 596px,#b50006 597px)"></i><i style="background:linear-gradient(90deg,#00a7ff 54px,#038dff 181px,#2c7cff 207px,#6f6bff 235px,#f15dff 274px,#ff5afa 279px,#ff3ec2 298px,#ff2690 324px,#ff1264 361px,#fb0646 402px,#dc0020 486px,#b70007 592px)"></i><i style="background:linear-gradient(90deg,#00a4ff 55px,#0289ff 180px,#2b79ff 206px,#6d67ff 234px,#f159ff 274px,#ff55fb 279px,#ff3ac1 299px,#ff228e 326px,#ff0f63 364px,#fb0547 402px,#d9001d 497px,#b90008 586px)"></i><i style="background:linear-gradient(90deg,#00a1ff 56px,#0385ff 180px,#2c74ff 206px,#6c64ff 233px,#ed55ff 273px,#ff51fb 279px,#ff37c1 299px,#ff208f 326px,#ff0e64 364px,#fb0448 403px,#d9001d 496px,#bb0009 581px)"></i><i style="background:linear-gradient(90deg,#009dff 57px,#0382ff 179px,#2b71ff 205px,#6a60ff 232px,#ed51ff 273px,#ff4dfc 279px,#ff34c2 299px,#ff1e90 326px,#ff0d65 364px,#fb0349 403px,#db001f 492px,#bd000b 575px)"></i><i style="background:linear-gradient(90deg,#009aff 58px,#037fff 178px,#2a6dff 204px,#685cff 231px,#ed4dff 273px,#ff4afc 279px,#ff31c3 299px,#ff1c91 326px,#ff0b65 365px,#fb024b 403px,#dc0021 489px,#bf000c 570px)"></i><i style="background:linear-gradient(90deg,#0097ff 58px,#027cff 177px,#2b69ff 204px,#6759ff 230px,#e949ff 272px,#ff46fd 279px,#ff2ec4 299px,#ff1a91 327px,#ff0966 366px,#fb014b 404px,#dd0023 486px,#c2000e 564px)"></i><i style="background:linear-gradient(90deg,#0094ff 59px,#0378ff 177px,#2c65ff 204px,#6556ff 229px,#e946ff 272px,#ff42fd 279px,#ff2bc5 299px,#ff1892 327px,#ff0867 366px,#fb014d 404px,#df0025 482px,#c4000f 558px)"></i><i style="background:linear-gradient(90deg,#0091ff 60px,#0375ff 176px,#2b62ff 203px,#6452ff 228px,#e942ff 272px,#ff3ffe 279px,#ff28c4 300px,#ff1592 328px,#ff0767 368px,#fa004d 405px,#e00027 478px,#c60011 553px)"></i><i style="background:linear-gradient(90deg,#008eff 61px,#0272ff 175px,#2a5eff 202px,#5f4fff 226px,#e23fff 270px,#ff3bfe 279px,#ff25c5 300px,#ff1493 328px,#ff0668 368px,#fa004f 405px,#e10028 475px,#c80013 547px)"></i><i style="background:linear-gradient(90deg,#008bff 62px,#026fff 174px,#295bff 201px,#5e4cff 225px,#e23bff 270px,#ff38fe 279px,#ff23c6 300px,#ff1193 329px,#ff0469 369px,#fb004f 405px,#e20029 475px,#ca0014 542px)"></i><i style="background:linear-gradient(90deg,#0088ff 63px,#036bff 174px,#2c57ff 202px,#5d49ff 224px,#e238ff 270px,#ff33fc 280px,#ff1fc2 302px,#ff0e90 332px,#ff0266 374px,#fa004e 408px,#e00028 480px,#cc0016 536px)"></i><i style="background:linear-gradient(90deg,#0085ff 64px,#0369ff 173px,#2b53ff 201px,#5b46ff 223px,#df35ff 269px,#ff30fc 280px,#ff1dc3 302px,#ff0d91 332px,#ff0267 374px,#fa004f 408px,#e00028 480px,#cf0018 530px)"></i><i style="background:linear-gradient(90deg,#0082ff 65px,#0266ff 172px,#2a50ff 200px,#5a43ff 222px,#df32ff 269px,#ff2dfc 280px,#ff1ac4 302px,#ff0b92 332px,#ff0169 374px,#fa004f 408px,#e00029 480px,#d1001a 525px)"></i><i style="background:linear-gradient(90deg,#007fff 66px,#0362ff 172px,#2d4cff 201px,#5b40ff 222px,#df2fff 269px,#ff2afd 280px,#ff18c5 302px,#ff0a93 332px,#ff006a 374px,#fa0050 408px,#e00029 480px,#d3001c 519px)"></i><i style="background:linear-gradient(90deg,#007dff 67px,#0360ff 171px,#2c49ff 200px,#573eff 220px,#dc2cff 268px,#ff27fd 280px,#ff16c6 302px,#ff0994 332px,#ff006b 374px,#fa0050 409px,#e0002a 481px,#d5001e 514px)"></i><i style="background:linear-gradient(90deg,#007aff 68px,#025dff 170px,#2b46ff 199px,#593bff 220px,#df29ff 269px,#ff24fe 280px,#ff14c6 302px,#ff0795 332px,#ff0068 379px,#f9004e 413px,#de0028 487px,#d70021 508px)"></i><i style="background:linear-gradient(90deg,#0077ff 69px,#025bff 169px,#2a43ff 198px,#5838ff 219px,#df26ff 269px,#ff21fe 280px,#ff12c5 303px,#ff0594 334px,#ff0062 388px,#e90035 457px,#d90023 503px)"></i><i style="background:linear-gradient(90deg,#0074ff 70px,#0357ff 169px,#2d3fff 199px,#6534ff 224px,#ed21ff 274px,#ff1efc 281px,#ff0fc4 304px,#ff0494 335px,#ff005f 393px,#e80034 460px,#db0025 497px)"></i><i style="background:linear-gradient(90deg,#0071ff 71px,#0355ff 168px,#2c3cff 198px,#6e30ff 227px,#f61dff 277px,#ff1bfc 281px,#ff0dc5 304px,#ff0394 336px,#ff0060 392px,#e80035 460px,#de0028 491px)"></i><i style="background:linear-gradient(90deg,#006eff 72px,#0252ff 167px,#2b3aff 197px,#792cff 231px,#ff19fc 281px,#ff0cc6 304px,#ff0295 336px,#ff0061 391px,#e90036 460px,#e0002b 486px)"></i><i style="background:linear-gradient(90deg,#006cff 73px,#0250ff 166px,#2a37ff 196px,#8428ff 235px,#ff16fd 281px,#ff0ac5 305px,#ff0195 337px,#ff0064 389px,#e90037 459px,#e2002e 480px)"></i><i style="background:linear-gradient(90deg,#0069ff 74px,#034dff 166px,#2d33ff 197px,#a121ff 246px,#ff14fd 281px,#ff08c5 305px,#ff0096 337px,#ff0066 387px,#ef003f 444px,#e40030 475px)"></i><i style="background:linear-gradient(90deg,#0066ff 75px,#034aff 165px,#2c31ff 196px,#a41eff 247px,#ff12fe 281px,#ff07c6 305px,#ff0095 339px,#ff0065 389px,#e90038 460px,#e60033 469px)"></i><i style="background:linear-gradient(90deg,#0063ff 76px,#0248ff 164px,#2b2eff 195px,#a71cff 248px,#ff0ffe 281px,#ff05c7 305px,#ff0093 341px,#ff0063 392px,#e90037 462px,#e90037 463px)"></i><i style="background:linear-gradient(90deg,#0061ff 77px,#0246ff 163px,#2a2cff 194px,#ad19ff 250px,#ff0dfe 281px,#ff04c8 305px,#ff0090 344px,#ff0061 397px,#eb003a 458px)"></i><i style="background:linear-gradient(90deg,#005eff 78px,#0244ff 162px,#2a29ff 193px,#b016ff 251px,#ff0bfc 282px,#ff02c5 307px,#ff008d 347px,#fd005c 404px,#ed003d 452px)"></i><i style="background:linear-gradient(90deg,#005bff 79px,#0241ff 162px,#2927ff 192px,#ae14ff 250px,#ff09fc 282px,#ff01c6 307px,#ff008f 346px,#ff0060 400px,#ef0041 447px)"></i><i style="background:linear-gradient(90deg,#0059ff 80px,#023fff 161px,#2726ff 190px,#ac12ff 249px,#ff07fd 282px,#ff00c7 307px,#ff0091 345px,#ff0062 398px,#f10045 441px)"></i><i style="background:linear-gradient(90deg,#0056ff 81px,#023dff 160px,#2624ff 189px,#ad10ff 249px,#ff06fd 282px,#ff00c6 308px,#ff0090 346px,#ff0061 400px,#f30048 436px)"></i><i style="background:linear-gradient(90deg,#0054ff 82px,#023bff 159px,#2622ff 188px,#ad0eff 249px,#ff04fd 282px,#ff00c5 309px,#ff0090 347px,#ff0060 402px,#f5004d 430px)"></i><i style="background:linear-gradient(90deg,#0051ff 83px,#0238ff 159px,#2520ff 187px,#ab0dff 248px,#ff03fe 282px,#ff00c3 310px,#ff008e 349px,#fd005d 408px,#f80051 424px)"></i><i style="background:linear-gradient(90deg,#004fff 84px,#0236ff 158px,#231fff 185px,#a90bff 247px,#ff01fe 282px,#ff00c4 310px,#ff008f 349px,#fd005d 408px,#fa0055 419px)"></i><i style="background:linear-gradient(90deg,#004cff 85px,#0234ff 157px,#231dff 184px,#aa0aff 247px,#ff00fc 283px,#ff00c1 312px,#ff008c 352px,#fc005a 413px)"></i><i style="background:linear-gradient(90deg,#0049ff 86px,#0232ff 156px,#201cff 182px,#a808ff 246px,#ff00fc 283px,#ff00c2 312px,#ff008d 352px,#fe005f 408px)"></i><i style="background:linear-gradient(90deg,#0047ff 87px,#022fff 156px,#201aff 181px,#a907ff 246px,#ff00fd 283px,#ff00c2 312px,#ff008e 352px,#ff0064 402px)"></i><i style="background:linear-gradient(90deg,#0044ff 88px,#022dff 155px,#2018ff 180px,#a706ff 245px,#ff00fd 283px,#ff00c3 312px,#ff008e 352px,#ff0068 396px)"></i><i style="background:linear-gradient(90deg,#0042ff 89px,#022bff 154px,#1e17ff 178px,#a604ff 244px,#ff00fd 283px,#ff00c3 312px,#ff008f 352px,#ff006d 391px)"></i><i style="background:linear-gradient(90deg,#0040ff 90px,#022aff 153px,#1e16ff 177px,#a603ff 244px,#ff00fe 283px,#ff00c4 312px,#ff0090 352px,#ff0072 385px)"></i><i style="background:linear-gradient(90deg,#003dff 91px,#0227ff 153px,#1d14ff 176px,#a702ff 244px,#ff00fe 283px,#ff00c3 313px,#ff008e 354px,#ff0076 380px)"></i><i style="background:linear-gradient(90deg,#003aff 93px,#0225ff 152px,#1b13ff 174px,#a401ff 242px,#ff00fe 283px,#ff00c3 313px,#ff008f 354px,#ff007c 374px)"></i><i style="background:linear-gradient(90deg,#0038ff 94px,#0223ff 151px,#1912ff 172px,#a201ff 241px,#ff00fc 284px,#ff00c2 314px,#ff008d 356px,#ff0081 369px)"></i><i style="background:linear-gradient(90deg,#0036ff 95px,#0222ff 150px,#1911ff 171px,#a300ff 241px,#ff00fc 284px,#ff00c3 314px,#ff008e 356px,#ff0087 363px)"></i><i style="background:linear-gradient(90deg,#0033ff 96px,#021fff 150px,#1710ff 169px,#a900ff 244px,#ff00fd 284px,#ff00c2 315px,#ff008e 357px)"></i><i style="background:linear-gradient(90deg,#0031ff 97px,#021dff 149px,#170eff 168px,#ac00ff 245px,#ff00fd 284px,#ff00c2 315px,#ff0093 352px)"></i><i style="background:linear-gradient(90deg,#002fff 98px,#021cff 148px,#160dff 166px,#a400ff 241px,#ff00fd 284px,#ff00c3 315px,#ff009a 346px)"></i><i style="background:linear-gradient(90deg,#002cff 99px,#021aff 147px,#160cff 165px,#9c00ff 237px,#ff00fe 284px,#ff00c3 315px,#ff00a0 341px)"></i><i style="background:linear-gradient(90deg,#002aff 100px,#0218ff 147px,#160bff 164px,#9500ff 233px,#ff00fe 284px,#ff00c4 315px,#ff00a8 335px)"></i><i style="background:linear-gradient(90deg,#0028ff 101px,#0216ff 146px,#140aff 162px,#9000ff 230px,#ff00fc 285px,#ff00c1 317px,#ff00b0 329px)"></i><i style="background:linear-gradient(90deg,#0025ff 102px,#0215ff 145px,#1209ff 160px,#8800ff 226px,#ff00fc 285px,#ff00c2 317px,#ff00b8 324px)"></i><i style="background:linear-gradient(90deg,#0023ff 104px,#0212ff 145px,#1408ff 160px,#8500ff 224px,#f800ff 281px,#ff00fa 286px,#ff00c1 318px)"></i><i style="background:linear-gradient(90deg,#0021ff 105px,#0211ff 144px,#1207ff 158px,#8200ff 222px,#f600ff 280px,#ff00fb 286px,#ff00c9 313px)"></i><i style="background:linear-gradient(90deg,#001eff 106px,#020fff 143px,#1306ff 157px,#8200ff 222px,#f600ff 280px,#ff00fb 286px,#ff00d3 307px)"></i><i style="background:linear-gradient(90deg,#001cff 107px,#020eff 142px,#1305ff 156px,#8800ff 225px,#fc00ff 283px,#ff00dc 302px)"></i><i style="background:linear-gradient(90deg,#001aff 108px,#020bff 142px,#1804ff 158px,#ac00ff 244px,#ff00fe 285px,#ff00e7 296px)"></i><i style="background:linear-gradient(90deg,#0018ff 110px,#020aff 141px,#1d02ff 160px,#a800ff 242px,#ff00fe 285px,#ff00f3 290px)"></i><i style="background:linear-gradient(90deg,#0015ff 111px,#0209ff 140px,#2701ff 165px,#a300ff 239px,#ff00fe 285px)"></i><i style="background:linear-gradient(90deg,#0013ff 112px,#0206ff 140px,#4f00ff 190px,#c000ff 254px,#f300ff 279px)"></i><i style="background:linear-gradient(90deg,#0011ff 113px,#0205ff 139px,#5b00ff 197px,#ce00ff 261px,#e800ff 274px)"></i><i style="background:linear-gradient(90deg,#000fff 115px,#0204ff 138px,#8b00ff 225px,#dc00ff 268px)"></i><i style="background:linear-gradient(90deg,#000dff 116px,#0302ff 138px,#8b00ff 225px,#d000ff 262px)"></i><i style="background:linear-gradient(90deg,#000aff 117px,#0301ff 137px,#8500ff 221px,#c600ff 257px)"></i><i style="background:linear-gradient(90deg,#0008ff 118px,#0201ff 135px,#7e00ff 217px,#bb00ff 251px)"></i><i style="background:linear-gradient(90deg,#0006ff 120px,#0300ff 134px,#7800ff 213px,#b100ff 246px)"></i><i style="background:linear-gradient(90deg,#0004ff 121px,#0300ff 133px,#7000ff 208px,#a700ff 240px)"></i><i style="background:linear-gradient(90deg,#0002ff 122px,#0400ff 133px,#7100ff 208px,#9e00ff 235px)"></i><i style="background:linear-gradient(90deg,#0000ff 123px,#0400ff 132px,#7100ff 208px,#9400ff 229px)"></i><i style="background:linear-gradient(90deg,#0000ff 125px,#0e00ff 139px,#7c00ff 214px,#8a00ff 223px)"></i><i style="background:linear-gradient(90deg,#0000ff 126px,#5600ff 190px,#8200ff 218px)"></i><i style="background:linear-gradient(90deg,#0000ff 127px,#6e00ff 205px,#7900ff 212px)"></i><i style="background:linear-gradient(90deg,#0400ff 129px,#7200ff 207px)"></i><i style="background:linear-gradient(90deg,#0600ff 130px,#6900ff 201px)"></i><i style="background:linear-gradient(90deg,#0800ff 131px,#6000ff 195px)"></i><i style="background:linear-gradient(90deg,#0c00ff 133px,#5900ff 190px)"></i><i style="background:linear-gradient(90deg,#0e00ff 134px,#5100ff 184px)"></i><i style="background:linear-gradient(90deg,#1100ff 136px,#4b00ff 179px)"></i><i style="background:linear-gradient(90deg,#1500ff 138px,#4300ff 173px)"></i><i style="background:linear-gradient(90deg,#1800ff 140px,#3d00ff 168px)"></i><i style="background:linear-gradient(90deg,#1d00ff 143px,#3500ff 162px)"></i><i></i></div>
<svg width="1920" height="1040" viewBox="0 0 1920 1040"><radialGradient id="dim" gradientUnits="userSpaceOnUse" cx="1439.0" cy="471.2" r="420"><stop offset=".5" stop-color="#000" stop-opacity=".40"/><stop offset=".7" stop-color="#000" stop-opacity=".465"/><stop offset=".88" stop-color="#000" stop-opacity=".575"/><stop offset="1" stop-color="#000" stop-opacity=".6"/></radialGradient><path d="M1321.2 674.8L1311.1 674.8L1305.1 670.8L1299.0 663.7L1291.0 651.6L1280.9 635.5L1270.8 619.3L1259.7 599.1L1247.5 576.9L1235.4 552.7L1224.3 528.5L1214.2 504.2L1204.1 480.0L1193.7 449.6L1182.0 416.0L1171.9 365.5L1168.5 335.0L1165.6 288.8L1165.6 260.0L1167.5 231.2L1172.3 212.0L1180.0 192.7L1190.6 175.4L1203.0 162.0L1214.6 154.2L1226.0 152.0L1251.0 152.0L1274.0 156.0L1299.0 163.5L1328.0 175.4L1366.5 194.6L1400.0 214.5L1480.8 266.6L1561.5 325.2L1622.0 369.6L1674.6 410.0L1718.0 442.0L1752.4 467.2L1775.2 484.3L1789.8 495.3L1799.7 503.4Z M1729.4 471.0L1427.6 293.0L1294.6 647.0Z" fill="url(#dim)" fill-rule="evenodd"/><clipPath id="loc"><polygon points="1321.2,674.8 1311.1,674.8 1305.1,670.8 1299.0,663.7 1291.0,651.6 1280.9,635.5 1270.8,619.3 1259.7,599.1 1247.5,576.9 1235.4,552.7 1224.3,528.5 1214.2,504.2 1204.1,480.0 1193.7,449.6 1182.0,416.0 1171.9,365.5 1168.5,335.0 1165.6,288.8 1165.6,260.0 1167.5,231.2 1172.3,212.0 1180.0,192.7 1190.6,175.4 1203.0,162.0 1214.6,154.2 1226.0,152.0 1251.0,152.0 1274.0,156.0 1299.0,163.5 1328.0,175.4 1366.5,194.6 1400.0,214.5 1480.8,266.6 1561.5,325.2 1622.0,369.6 1674.6,410.0 1718.0,442.0 1752.4,467.2 1775.2,484.3 1789.8,495.3 1799.7,503.4"/></clipPath><linearGradient id="dim2" gradientUnits="userSpaceOnUse" x1="1480" y1="0" x2="1760" y2="0"><stop offset="0" stop-color="#000" stop-opacity="0"/><stop offset="1" stop-color="#000" stop-opacity=".2"/></linearGradient><path clip-path="url(#loc)" d="M1294.6 647L1729.4 471L1850 520V700H1250Z" fill="url(#dim2)"/><path d="M1486.6 462.6h16.8v16.8h-16.8zM1547.6 462.6h16.8v16.8h-16.8zM1599.1 462.6h16.8v16.8h-16.8zM1657.1 462.6h16.8v16.8h-16.8zM1721.2 462.6h16.8v16.8h-16.8zM1428.7 426.6h16.8v16.8h-16.8zM1425.1 392.5h16.8v16.8h-16.8zM1424.1 357.1h16.8v16.8h-16.8zM1422.2 323.2h16.8v16.8h-16.8zM1419.1 284.5h16.8v16.8h-16.8zM1402.2 497.6h16.8v16.8h-16.8zM1372.1 533.6h16.8v16.8h-16.8zM1345.5 566.0h16.8v16.8h-16.8zM1317.1 600.1h16.8v16.8h-16.8zM1286.1 638.6h16.8v16.8h-16.8zM1415.0 462.5h16.8v16.8h-16.8zM1398.7 462.5h16.8v16.8h-16.8zM1382.6 462.5h16.8v16.8h-16.8zM1368.8 462.5h16.8v16.8h-16.8zM1351.8 462.5h16.8v16.8h-16.8zM1432.1 486.0h16.8v16.8h-16.8zM1433.1 509.5h16.8v16.8h-16.8zM1435.1 530.5h16.8v16.8h-16.8zM1436.1 552.7h16.8v16.8h-16.8zM1438.1 576.5h16.8v16.8h-16.8zM1449.2 438.5h16.8v16.8h-16.8zM1469.2 414.5h16.8v16.8h-16.8zM1488.2 392.5h16.8v16.8h-16.8zM1505.1 371.5h16.8v16.8h-16.8zM1525.6 346.5h16.8v16.8h-16.8z" fill="none" stroke="#fff" stroke-width="1.5"/><rect x="1430.1" y="462.6" width="16.8" height="16.8" fill="none" stroke="#000" stroke-width="1.9"/><g stroke="#000" stroke-width="1.25"><circle cx="1433.9" cy="443" r="5.25" fill="#9cbe9c"/><circle cx="1441.5" cy="401" r="5.25" fill="#7ebe7e"/><circle cx="1449.4" cy="363.1" r="5.25" fill="#64be64"/><circle cx="1456.1" cy="336.8" r="5.25" fill="#46be46"/><circle cx="1463.3" cy="298.9" r="5.25" fill="#00c000"/><circle cx="1449.4" cy="451.3" r="5.25" fill="#bebea0"/><circle cx="1479.5" cy="415.9" r="5.25" fill="#bebe82"/><circle cx="1499.5" cy="391.9" r="5.25" fill="#c2c26e"/><circle cx="1518.4" cy="369.9" r="5.25" fill="#bebe50"/><circle cx="1537" cy="347.9" r="5.25" fill="#c4be14"/><circle cx="1484" cy="476.8" r="5.25" fill="#c08888"/><circle cx="1532.5" cy="477.8" r="5.25" fill="#ba6464"/><circle cx="1578" cy="471.9" r="5.25" fill="#be5050"/><circle cx="1634.5" cy="467.8" r="5.25" fill="#be383c"/><circle cx="1706.4" cy="462.8" r="5.25" fill="#c80000"/><circle cx="1381.25" cy="484.1" r="5.25" fill="#56baba"/><circle cx="1374.25" cy="483" r="5.25" fill="#00c0c0"/><circle cx="1389.4" cy="484.1" r="5.25" fill="#74baba"/><circle cx="1400" cy="483.9" r="5.25" fill="#8cbaba"/><circle cx="1413.1" cy="483.9" r="5.25" fill="#a0baba"/><circle cx="1391.3" cy="525.3" r="5.25" fill="#9696be"/><circle cx="1363.5" cy="559.8" r="5.25" fill="#7e78be"/><circle cx="1340" cy="585.9" r="5.25" fill="#6464be"/><circle cx="1324.5" cy="606.9" r="5.25" fill="#4642ba"/><circle cx="1302.5" cy="633.7" r="5.25" fill="#0000c0"/><circle cx="1418" cy="513.8" r="5.25" fill="#ba9cb6"/><circle cx="1411.9" cy="539" r="5.25" fill="#ba82ba"/><circle cx="1410.5" cy="557" r="5.25" fill="#be6ebe"/><circle cx="1407.5" cy="574.6" r="5.25" fill="#be50be"/><circle cx="1402.4" cy="590.9" r="5.25" fill="#c000c0"/><circle cx="1423.1" cy="485.4" r="5.25" fill="#fff"/></g>

<path d="M1162 688V137H1907V688" fill="none" stroke="#9a9a9a" stroke-width="2"/>
<path d="M1161 687.1H1908" stroke="#b4b4b4" stroke-width="2"/>
<path d="M1161.8 687.5v6.500" stroke="#e0e0e0" stroke-width="1.6"/>
<path d="M1155 688.0h6.5" stroke="#d0d0d0" stroke-width="1.3"/>
<text x="1161.8" y="711.5" font-size="15.8" fill="#e0e0e0" text-anchor="middle">0</text>
<text x="1154.7" y="694.9" font-size="15.8" fill="#e0e0e0" text-anchor="end">0</text>
<path d="M1250.5 687.5v6.500" stroke="#e0e0e0" stroke-width="1.6"/>
<path d="M1155 622.5h6.5" stroke="#d0d0d0" stroke-width="1.3"/>
<text x="1250.5" y="711.5" font-size="15.8" fill="#e0e0e0" text-anchor="middle" textLength="23.4" lengthAdjust="spacingAndGlyphs">0,1</text>
<text x="1154.7" y="629.4" font-size="15.8" fill="#e0e0e0" text-anchor="end" textLength="23.4" lengthAdjust="spacingAndGlyphs">0,1</text>
<path d="M1339.2 687.5v6.500" stroke="#e0e0e0" stroke-width="1.6"/>
<path d="M1155 556.9h6.5" stroke="#d0d0d0" stroke-width="1.3"/>
<text x="1339.2" y="711.5" font-size="15.8" fill="#e0e0e0" text-anchor="middle" textLength="23.4" lengthAdjust="spacingAndGlyphs">0,2</text>
<text x="1154.7" y="563.8" font-size="15.8" fill="#e0e0e0" text-anchor="end" textLength="23.4" lengthAdjust="spacingAndGlyphs">0,2</text>
<path d="M1427.8 687.5v6.500" stroke="#e0e0e0" stroke-width="1.6"/>
<path d="M1155 491.4h6.5" stroke="#d0d0d0" stroke-width="1.3"/>
<text x="1427.8" y="711.5" font-size="15.8" fill="#e0e0e0" text-anchor="middle" textLength="23.4" lengthAdjust="spacingAndGlyphs">0,3</text>
<text x="1154.7" y="498.2" font-size="15.8" fill="#e0e0e0" text-anchor="end" textLength="23.4" lengthAdjust="spacingAndGlyphs">0,3</text>
<path d="M1516.5 687.5v6.500" stroke="#e0e0e0" stroke-width="1.6"/>
<path d="M1155 425.8h6.5" stroke="#d0d0d0" stroke-width="1.3"/>
<text x="1516.5" y="711.5" font-size="15.8" fill="#e0e0e0" text-anchor="middle" textLength="23.4" lengthAdjust="spacingAndGlyphs">0,4</text>
<text x="1154.7" y="432.7" font-size="15.8" fill="#e0e0e0" text-anchor="end" textLength="23.4" lengthAdjust="spacingAndGlyphs">0,4</text>
<path d="M1605.2 687.5v6.500" stroke="#e0e0e0" stroke-width="1.6"/>
<path d="M1155 360.2h6.5" stroke="#d0d0d0" stroke-width="1.3"/>
<text x="1605.2" y="711.5" font-size="15.8" fill="#e0e0e0" text-anchor="middle" textLength="23.4" lengthAdjust="spacingAndGlyphs">0,5</text>
<text x="1154.7" y="367.1" font-size="15.8" fill="#e0e0e0" text-anchor="end" textLength="23.4" lengthAdjust="spacingAndGlyphs">0,5</text>
<path d="M1693.9 687.5v6.500" stroke="#e0e0e0" stroke-width="1.6"/>
<path d="M1155 294.7h6.5" stroke="#d0d0d0" stroke-width="1.3"/>
<text x="1693.9" y="711.5" font-size="15.8" fill="#e0e0e0" text-anchor="middle" textLength="23.4" lengthAdjust="spacingAndGlyphs">0,6</text>
<text x="1154.7" y="301.6" font-size="15.8" fill="#e0e0e0" text-anchor="end" textLength="23.4" lengthAdjust="spacingAndGlyphs">0,6</text>
<path d="M1782.6 687.5v6.500" stroke="#e0e0e0" stroke-width="1.6"/>
<path d="M1155 229.2h6.5" stroke="#d0d0d0" stroke-width="1.3"/>
<text x="1782.6" y="711.5" font-size="15.8" fill="#e0e0e0" text-anchor="middle" textLength="23.4" lengthAdjust="spacingAndGlyphs">0,7</text>
<text x="1154.7" y="236.1" font-size="15.8" fill="#e0e0e0" text-anchor="end" textLength="23.4" lengthAdjust="spacingAndGlyphs">0,7</text>
<path d="M1871.2 687.5v6.500" stroke="#e0e0e0" stroke-width="1.6"/>
<path d="M1155 163.6h6.5" stroke="#d0d0d0" stroke-width="1.3"/>
<text x="1871.2" y="711.5" font-size="15.8" fill="#e0e0e0" text-anchor="middle" textLength="23.4" lengthAdjust="spacingAndGlyphs">0,8</text>
<text x="1154.7" y="170.5" font-size="15.8" fill="#e0e0e0" text-anchor="end" textLength="23.4" lengthAdjust="spacingAndGlyphs">0,8</text>
<rect x="1691.5" y="133" width="219.500" height="208.5" fill="#333"/>
</svg>
<div class="cie b" style="left:1695px;top:136px;width:213px;height:202px"><i style="background:linear-gradient(90deg,#b0ff00 0px,#fffd00 175px,#ffeb00 213px)"></i><i style="background:linear-gradient(90deg,#b1ff00 0px,#fffd00 173px,#ffea00 213px)"></i><i style="background:linear-gradient(90deg,#b2ff00 0px,#fffd00 171px,#ffe900 213px)"></i><i style="background:linear-gradient(90deg,#b3ff00 0px,#fffd00 169px,#ffe800 213px)"></i><i style="background:linear-gradient(90deg,#b3ff00 0px,#fffd00 167px,#ffe800 213px)"></i><i style="background:linear-gradient(90deg,#b4ff00 0px,#fffd00 165px,#ffe700 213px)"></i><i style="background:linear-gradient(90deg,#b5ff00 0px,#fffd00 163px,#ffe600 213px)"></i><i style="background:linear-gradient(90deg,#b6ff00 0px,#fffd00 161px,#ffe500 213px)"></i><i style="background:linear-gradient(90deg,#b6ff00 0px,#fffd00 159px,#ffe400 213px)"></i><i style="background:linear-gradient(90deg,#b7ff00 0px,#fffd00 157px,#ffe300 213px)"></i><i style="background:linear-gradient(90deg,#b7ff00 0px,#fffd00 155px,#ffe200 213px)"></i><i style="background:linear-gradient(90deg,#b8ff00 0px,#fffc00 154px,#ffe200 213px)"></i><i style="background:linear-gradient(90deg,#b9ff01 0px,#fffc00 152px,#ffe100 213px)"></i><i style="background:linear-gradient(90deg,#baff01 0px,#fffc00 150px,#ffe000 213px)"></i><i style="background:linear-gradient(90deg,#baff01 0px,#fffd00 148px,#ffdf00 213px)"></i><i style="background:linear-gradient(90deg,#bbff01 0px,#fffd00 146px,#ffde00 213px)"></i><i style="background:linear-gradient(90deg,#bcff01 0px,#fffd00 144px,#ffdd00 213px)"></i><i style="background:linear-gradient(90deg,#bcff01 0px,#fffd00 142px,#ffdd00 213px)"></i><i style="background:linear-gradient(90deg,#bdff02 0px,#fffd00 140px,#ffdc00 213px)"></i><i style="background:linear-gradient(90deg,#beff02 0px,#fffd00 138px,#ffdb00 213px)"></i><i style="background:linear-gradient(90deg,#bfff02 0px,#fffd00 136px,#ffda00 213px)"></i><i style="background:linear-gradient(90deg,#bfff02 0px,#fffd00 134px,#ffd900 213px)"></i><i style="background:linear-gradient(90deg,#c0ff02 0px,#fffd00 132px,#ffd800 213px)"></i><i style="background:linear-gradient(90deg,#c1ff03 0px,#fffd00 130px,#ffd800 213px)"></i><i style="background:linear-gradient(90deg,#c2ff03 0px,#fffd00 128px,#ffd700 213px)"></i><i style="background:linear-gradient(90deg,#c2ff03 0px,#fffc00 127px,#ffd600 213px)"></i><i style="background:linear-gradient(90deg,#c3ff03 0px,#fffc00 125px,#ffd500 213px)"></i><i style="background:linear-gradient(90deg,#c4ff04 0px,#fffc00 123px,#ffd400 213px)"></i><i style="background:linear-gradient(90deg,#c5ff04 0px,#fffc00 121px,#ffd400 213px)"></i><i style="background:linear-gradient(90deg,#c5ff04 0px,#fffd00 119px,#ffd300 213px)"></i><i style="background:linear-gradient(90deg,#c6ff04 0px,#fffd00 117px,#ffd200 213px)"></i><i style="background:linear-gradient(90deg,#c7ff05 0px,#fffd00 115px,#ffd100 213px)"></i><i style="background:linear-gradient(90deg,#c8ff05 0px,#fffd00 113px,#ffd000 213px)"></i><i style="background:linear-gradient(90deg,#c9ff05 0px,#fffd00 111px,#ffd000 213px)"></i><i style="background:linear-gradient(90deg,#c9ff05 0px,#fffd00 109px,#ffcf00 213px)"></i><i style="background:linear-gradient(90deg,#caff06 0px,#fffd00 107px,#ffce00 213px)"></i><i style="background:linear-gradient(90deg,#cbff06 0px,#fffd00 105px,#ffcd00 213px)"></i><i style="background:linear-gradient(90deg,#ccff06 0px,#fffd01 103px,#ffcc00 213px)"></i><i style="background:linear-gradient(90deg,#cdff06 0px,#fffd01 101px,#ffcc00 213px)"></i><i style="background:linear-gradient(90deg,#ceff07 0px,#fffd01 99px,#ffcb00 213px)"></i><i style="background:linear-gradient(90deg,#ceff07 0px,#fffc01 98px,#ffca00 213px)"></i><i style="background:linear-gradient(90deg,#cfff07 0px,#fffc02 96px,#ffc900 213px)"></i><i style="background:linear-gradient(90deg,#d0ff08 0px,#fffc02 94px,#ffc800 213px)"></i><i style="background:linear-gradient(90deg,#d1ff08 0px,#fffc02 92px,#ffc800 213px)"></i><i style="background:linear-gradient(90deg,#d2ff08 0px,#fffd03 90px,#ffc700 213px)"></i><i style="background:linear-gradient(90deg,#d3ff08 0px,#fffd03 88px,#ffc700 210px,#ffc600 213px)"></i><i style="background:linear-gradient(90deg,#d4ff09 0px,#fffd03 86px,#ffc800 206px,#ffc500 213px)"></i><i style="background:linear-gradient(90deg,#d4ff09 0px,#fffd04 84px,#ffc800 203px,#ffc500 213px)"></i><i style="background:linear-gradient(90deg,#d5ff09 0px,#fffd04 82px,#ffc900 199px,#ffc400 213px)"></i><i style="background:linear-gradient(90deg,#d6ff0a 0px,#fffd04 80px,#ffc900 196px,#ffc300 213px)"></i><i style="background:linear-gradient(90deg,#d7ff0a 0px,#fffd05 78px,#ffca00 192px,#ffc200 213px)"></i><i style="background:linear-gradient(90deg,#d8ff0a 0px,#fffd05 76px,#ffca00 189px,#ffc100 213px)"></i><i style="background:linear-gradient(90deg,#d9ff0b 0px,#fffd06 74px,#ffcb00 186px,#ffc100 213px)"></i><i style="background:linear-gradient(90deg,#daff0b 0px,#fffd06 72px,#ffcb00 183px,#ffc000 213px)"></i><i style="background:linear-gradient(90deg,#dbff0b 0px,#fffd06 70px,#ffcb00 181px,#ffbf00 213px)"></i><i style="background:linear-gradient(90deg,#dcff0c 0px,#fffc07 69px,#ffca00 180px,#ffbe00 213px)"></i><i style="background:linear-gradient(90deg,#ddff0c 0px,#fffc07 67px,#ffca01 178px,#ffbe00 213px)"></i><i style="background:linear-gradient(90deg,#deff0c 0px,#fffc08 65px,#ffca01 176px,#ffbd00 213px)"></i><i style="background:linear-gradient(90deg,#dfff0d 0px,#fffc08 63px,#ffca01 174px,#ffbc00 213px)"></i><i style="background:linear-gradient(90deg,#e0ff0d 0px,#fffc09 61px,#ffca01 171px,#ffbb00 213px)"></i><i style="background:linear-gradient(90deg,#e1ff0d 0px,#fffd09 59px,#ffca02 169px,#ffbb00 213px)"></i><i style="background:linear-gradient(90deg,#e2ff0e 0px,#fffd0a 57px,#ffca02 167px,#ffba00 213px)"></i><i style="background:linear-gradient(90deg,#e2ff0e 0px,#fffd0a 55px,#ffca02 165px,#ffb900 213px)"></i><i style="background:linear-gradient(90deg,#e3ff0e 0px,#fffd0a 53px,#ffca02 162px,#ffb800 213px)"></i><i style="background:linear-gradient(90deg,#e4ff0f 0px,#fffd0b 51px,#ffca03 160px,#ffb700 213px)"></i><i style="background:linear-gradient(90deg,#e5ff0f 0px,#fffd0b 49px,#ffca03 158px,#ffb701 213px)"></i><i style="background:linear-gradient(90deg,#e6ff0f 0px,#fffd0c 47px,#ffca03 156px,#ffb601 213px)"></i><i style="background:linear-gradient(90deg,#e8ff10 0px,#fffc0c 46px,#ffc904 155px,#ffb501 213px)"></i></div>
<svg width="1920" height="1040" viewBox="0 0 1920 1040"><clipPath id="icl"><rect x="1695" y="136" width="213" height="202"/></clipPath><path clip-path="url(#icl)" d="M1695 136H1908V316.9L1695 157.2Z" fill="#000" fill-opacity=".405"/><rect x="1792.8" y="228.2" width="17.4" height="17.4" fill="none" stroke="#fff" stroke-width="1.6"/><g stroke="#000" stroke-width="1.25"><circle cx="1817" cy="188" r="5.6" fill="#c4be14"/><circle cx="1729.3" cy="322.1" r="5.9" fill="#bebe50"/></g>

<rect x="1695.5" y="136.5" width="212" height="201" fill="none" stroke="#8c8c8c" stroke-width="1.6"/>
<rect x="1348" y="750" width="336" height="204" fill="#000"/>
<rect x="0" y="977" width="1920" height="63" fill="url(#bot)"/>
<rect x="1.5" y="978.5" width="44" height="62" rx="4" fill="url(#box)"/>
<circle cx="23.5" cy="986.5" r="7" fill="#6a6a6a"/><path d="M19.5 988.6h8l-4-4.6z" fill="#1c1c1c"/>
<rect x="5.5" y="1003.5" width="36" height="31" rx="3.5" fill="#ffff00" stroke="#b0b0b0" stroke-width="1"/>
<rect x="52" y="978" width="150" height="62" rx="4" fill="url(#box)"/>
<rect x="57.5" y="983.5" width="141" height="36" rx="3" fill="#c1c1a5" stroke="#8a8a7a" stroke-width="1.1"/>
<text x="127" y="1033.5" font-size="10.3" fill="#404040" text-anchor="middle" font-weight="bold">20%</text>
<rect x="204" y="978" width="150" height="62" rx="4" fill="url(#box)"/>
<rect x="209.5" y="983.5" width="141" height="36" rx="3" fill="#c2c28a" stroke="#8a8a7a" stroke-width="1.1"/>
<text x="279" y="1033.5" font-size="10.3" fill="#404040" text-anchor="middle" font-weight="bold">40%</text>
<rect x="356" y="978" width="150" height="62" rx="4" fill="url(#box)"/>
<rect x="361.5" y="983.5" width="141" height="36" rx="3" fill="#c2c26e" stroke="#8a8a7a" stroke-width="1.1"/>
<text x="431" y="1033.5" font-size="10.3" fill="#404040" text-anchor="middle" font-weight="bold">60%</text>
<rect x="508" y="978" width="150" height="62" rx="4" fill="url(#box)"/>
<rect x="513.5" y="983.5" width="141" height="36" rx="3" fill="#c2c24e" stroke="#8a8a7a" stroke-width="1.1"/>
<text x="583" y="1033.5" font-size="10.3" fill="#404040" text-anchor="middle" font-weight="bold">80%</text>
<rect x="660" y="978" width="150" height="62" rx="4" fill="url(#boxs)"/>
<rect x="665.5" y="983.5" width="141" height="36" rx="3" fill="#c3c100" stroke="#bcbcbc" stroke-width="1.1"/>
<text x="735" y="1033.5" font-size="10.3" fill="#f0f0f0" text-anchor="middle" font-weight="bold">100%</text>
<path d="M1597 996v-14a4 4 0 0 1 4-4h40a4 4 0 0 1 4 4v14z" fill="url(#tb)"/>
<circle cx="1621.5" cy="987" r="7" fill="url(#tbc)"/><path d="M1617.3 989.2h8.4l-4.2-4.8z" fill="#2a2a2a"/>
<path d="M1597 997h48v39a4 4 0 0 1-4 4h-40a4 4 0 0 1-4-4z" fill="url(#tb)"/>
<rect x="1606" y="1003" width="31" height="31" rx="4" fill="none" stroke="#1c1c1c" stroke-width="2.6"/><rect x="1604.2" y="1001.2" width="34.6" height="34.6" rx="5" fill="none" stroke="#d8d8d8" stroke-width="1"/>
<rect x="1614" y="1011" width="15" height="14" fill="#000"/>
<path d="M1646.0 1008v-26a4 4 0 0 1 4-4h40.2v30z" fill="url(#tb)"/>
<circle cx="1668.3" cy="993" r="10" fill="url(#tbc)"/>
<rect x="1664.3" y="989" width="8" height="8" fill="#242424"/>
<rect x="1691.4" y="978" width="44.2" height="30" fill="url(#tb)"/>
<circle cx="1713.7" cy="993" r="10" fill="url(#tbc)"/>
<path d="M1710.4 988v10l8-5z" fill="#242424"/>
<rect x="1736.8" y="978" width="44.2" height="30" fill="url(#tb)"/>
<circle cx="1759.1" cy="993" r="10" fill="url(#tbc)"/>
<path d="M1755.7 988.5h-2.2v9h2.2M1762.5 988.5h2.2v9h-2.2" fill="none" stroke="#242424" stroke-width="1.6"/><path d="M1756.4 993.3h5.4" fill="none" stroke="#242424" stroke-width="1.4" stroke-dasharray="1.2 .9"/>
<rect x="1782.2" y="978" width="44.2" height="30" fill="url(#tb)"/>
<circle cx="1804.5" cy="993" r="10" fill="url(#tbc)"/>
<path d="M1804.5 993c-2-3.6-6.5-3.6-6.5 0s4.5 3.6 6.5 0c2-3.6 6.5-3.6 6.5 0s-4.5 3.6-6.5 0z" fill="none" stroke="#242424" stroke-width="1.6"/>
<rect x="1827.6" y="978" width="44.2" height="30" fill="url(#tbd)"/>
<circle cx="1849.9" cy="993" r="10" fill="#2c2c2c"/>
<path d="M1844.9 992a5 5 0 0 1 9-2.4M1854.9 994a5 5 0 0 1-9 2.4" fill="none" stroke="#1c1c1c" stroke-width="2"/><path d="M1855.5 986.8v4.6h-4.6zM1844.3 999.2v-4.6h4.6z" fill="#1c1c1c"/>
<rect x="1873.0" y="978" width="44.2" height="30" fill="url(#tbd)"/>
<circle cx="1895.3" cy="993" r="10" fill="#2c2c2c"/>
<path d="M1646 1009h136v30h-132a4 4 0 0 1-4-4z" fill="url(#tb)"/>
<path d="M1783 1009h131a4 4 0 0 1 4 4v22a4 4 0 0 1-4 4h-131z" fill="url(#tb)"/>
<circle cx="1677" cy="1023.5" r="10" fill="url(#tbc)"/><path d="M1677 1019l-4.5 4.5 4.500 4.5M1682 1019l-4.500 4.500 4.500 4.500" fill="none" stroke="#2a2a2a" stroke-width="1.5"/>
<circle cx="1890" cy="1023.5" r="10" fill="url(#tbc)"/><path d="M1886 1019l4.500 4.500-4.500 4.500M1891 1019l4.500 4.500-4.500 4.500" fill="none" stroke="#2a2a2a" stroke-width="1.5"/>
<text x="1703.5" y="1031.8" font-size="22.5" fill="#2c2c2c" textLength="51" lengthAdjust="spacingAndGlyphs" stroke="#2c2c2c" stroke-width=".5">Back</text>
<text x="1809.5" y="1031.8" font-size="22.5" fill="#2c2c2c" textLength="53" lengthAdjust="spacingAndGlyphs" stroke="#2c2c2c" stroke-width=".5">Next</text></svg>
</body></html>
